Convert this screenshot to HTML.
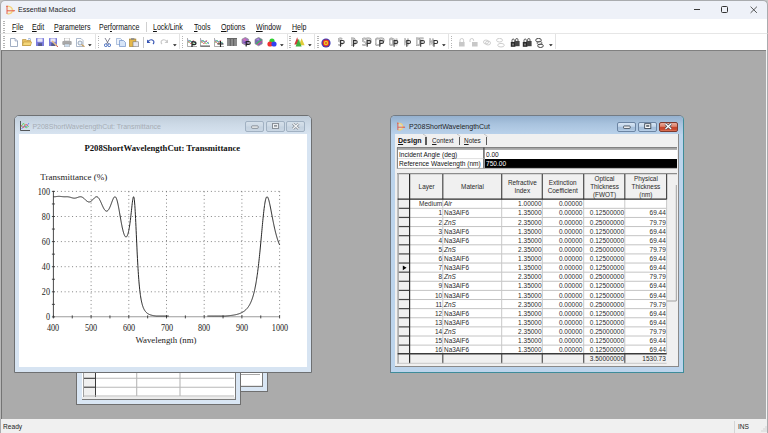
<!DOCTYPE html>
<html><head><meta charset="utf-8"><style>
*{margin:0;padding:0;box-sizing:border-box}
html,body{width:768px;height:433px;overflow:hidden;background:#c6c6c6}
body{position:relative;font-family:"Liberation Sans",sans-serif;color:#000}
.a{position:absolute}
.t{position:absolute;white-space:nowrap;line-height:1}
</style></head><body>
<div class="a" style="left:0px;top:0px;width:768px;height:19px;background:#eef1f8;border:1px solid #a9abae;border-bottom:none;border-radius:5px 5px 0 0"></div>
<svg class="a" style="left:5px;top:4.5px" width="11" height="10" viewBox="0 0 11 10">
<path d="M2.5 1.2 Q7.4 1.6 7.4 5.2 Q7.4 8.8 2.5 9" stroke="#f3d27a" stroke-width="1.3" fill="#fbeec0" fill-opacity="0.5"/>
<path d="M2 1 V9" stroke="#e2503c" stroke-width="0.9"/>
<path d="M2 0.2 L1 1.8 H3 Z" fill="#e2503c"/>
<path d="M2 5.8 H9" stroke="#e2503c" stroke-width="0.9"/>
<path d="M10.2 5.8 L8.6 4.8 V6.8 Z" fill="#e2503c"/></svg>
<div class="t" style="left:17.5px;top:5.6px;font-size:7.6px;color:#1b1b1b;font-weight:400;font-family:'Liberation Sans',sans-serif;transform:scaleX(0.93);transform-origin:0 0">Essential Macleod</div>
<div class="a" style="left:693.5px;top:8.8px;width:6.6px;height:0.9px;background:#3a3a3a"></div>
<div class="a" style="left:721px;top:6.3px;width:7px;height:6.3px;border:1px solid #333;border-radius:1.5px"></div>
<svg class="a" style="left:749.5px;top:6px" width="8" height="8" viewBox="0 0 8 8">
<path d="M0.6 0.7 L6.9 6.9 M6.9 0.7 L0.6 6.9" stroke="#3a3a3a" stroke-width="0.85"/></svg>
<div class="a" style="left:0px;top:19px;width:768px;height:14px;background:#fff;border-left:1px solid #a9abae;border-right:1px solid #a9abae"></div>
<div class="a" style="left:3.2px;top:21px;width:1.6px;height:0.9px;background:#b4b4b4"></div>
<div class="a" style="left:3.2px;top:23.2px;width:1.6px;height:0.9px;background:#b4b4b4"></div>
<div class="a" style="left:3.2px;top:25.4px;width:1.6px;height:0.9px;background:#b4b4b4"></div>
<div class="a" style="left:3.2px;top:27.599999999999998px;width:1.6px;height:0.9px;background:#b4b4b4"></div>
<div class="a" style="left:3.2px;top:29.799999999999997px;width:1.6px;height:0.9px;background:#b4b4b4"></div>
<div class="a" style="left:3.2px;top:31.999999999999996px;width:1.6px;height:0.9px;background:#b4b4b4"></div>
<div class="t" style="left:11.5px;top:23.6px;font-size:8.2px;color:#111;font-weight:400;font-family:'Liberation Sans',sans-serif;transform:scaleX(0.86);transform-origin:0 0"><u>F</u>ile</div>
<div class="t" style="left:32px;top:23.6px;font-size:8.2px;color:#111;font-weight:400;font-family:'Liberation Sans',sans-serif;transform:scaleX(0.86);transform-origin:0 0"><u>E</u>dit</div>
<div class="t" style="left:54px;top:23.6px;font-size:8.2px;color:#111;font-weight:400;font-family:'Liberation Sans',sans-serif;transform:scaleX(0.86);transform-origin:0 0"><u>P</u>arameters</div>
<div class="t" style="left:99px;top:23.6px;font-size:8.2px;color:#111;font-weight:400;font-family:'Liberation Sans',sans-serif;transform:scaleX(0.86);transform-origin:0 0">Per<u>f</u>ormance</div>
<div class="t" style="left:153px;top:23.6px;font-size:8.2px;color:#111;font-weight:400;font-family:'Liberation Sans',sans-serif;transform:scaleX(0.86);transform-origin:0 0"><u>L</u>ock/Link</div>
<div class="t" style="left:194px;top:23.6px;font-size:8.2px;color:#111;font-weight:400;font-family:'Liberation Sans',sans-serif;transform:scaleX(0.86);transform-origin:0 0"><u>T</u>ools</div>
<div class="t" style="left:221px;top:23.6px;font-size:8.2px;color:#111;font-weight:400;font-family:'Liberation Sans',sans-serif;transform:scaleX(0.86);transform-origin:0 0"><u>O</u>ptions</div>
<div class="t" style="left:256px;top:23.6px;font-size:8.2px;color:#111;font-weight:400;font-family:'Liberation Sans',sans-serif;transform:scaleX(0.86);transform-origin:0 0"><u>W</u>indow</div>
<div class="t" style="left:292px;top:23.6px;font-size:8.2px;color:#111;font-weight:400;font-family:'Liberation Sans',sans-serif;transform:scaleX(0.86);transform-origin:0 0"><u>H</u>elp</div>
<div class="a" style="left:146px;top:21.5px;width:1px;height:10px;background:#d0d0d0"></div>
<div class="a" style="left:1px;top:33px;width:766px;height:1px;background:#e6e6e6"></div>
<div class="a" style="left:0px;top:34px;width:768px;height:16px;background:#fff;border-left:1px solid #a9abae;border-right:1px solid #a9abae"></div>
<div class="a" style="left:94.5px;top:34px;width:1px;height:15px;background:#e3e3e3"></div>
<div class="a" style="left:178.5px;top:34px;width:1px;height:15px;background:#e3e3e3"></div>
<div class="a" style="left:286.5px;top:34px;width:1px;height:15px;background:#e3e3e3"></div>
<div class="a" style="left:314px;top:34px;width:1px;height:15px;background:#e3e3e3"></div>
<div class="a" style="left:447.8px;top:34px;width:1px;height:15px;background:#e3e3e3"></div>
<div class="a" style="left:554.8px;top:34px;width:1px;height:15px;background:#e3e3e3"></div>
<div class="a" style="left:3.2px;top:36px;width:1.6px;height:0.9px;background:#b4b4b4"></div>
<div class="a" style="left:3.2px;top:38.2px;width:1.6px;height:0.9px;background:#b4b4b4"></div>
<div class="a" style="left:3.2px;top:40.400000000000006px;width:1.6px;height:0.9px;background:#b4b4b4"></div>
<div class="a" style="left:3.2px;top:42.60000000000001px;width:1.6px;height:0.9px;background:#b4b4b4"></div>
<div class="a" style="left:3.2px;top:44.80000000000001px;width:1.6px;height:0.9px;background:#b4b4b4"></div>
<div class="a" style="left:3.2px;top:47.000000000000014px;width:1.6px;height:0.9px;background:#b4b4b4"></div>
<div class="a" style="left:97.7px;top:36px;width:1.6px;height:0.9px;background:#b4b4b4"></div>
<div class="a" style="left:97.7px;top:38.2px;width:1.6px;height:0.9px;background:#b4b4b4"></div>
<div class="a" style="left:97.7px;top:40.400000000000006px;width:1.6px;height:0.9px;background:#b4b4b4"></div>
<div class="a" style="left:97.7px;top:42.60000000000001px;width:1.6px;height:0.9px;background:#b4b4b4"></div>
<div class="a" style="left:97.7px;top:44.80000000000001px;width:1.6px;height:0.9px;background:#b4b4b4"></div>
<div class="a" style="left:97.7px;top:47.000000000000014px;width:1.6px;height:0.9px;background:#b4b4b4"></div>
<div class="a" style="left:181.7px;top:36px;width:1.6px;height:0.9px;background:#b4b4b4"></div>
<div class="a" style="left:181.7px;top:38.2px;width:1.6px;height:0.9px;background:#b4b4b4"></div>
<div class="a" style="left:181.7px;top:40.400000000000006px;width:1.6px;height:0.9px;background:#b4b4b4"></div>
<div class="a" style="left:181.7px;top:42.60000000000001px;width:1.6px;height:0.9px;background:#b4b4b4"></div>
<div class="a" style="left:181.7px;top:44.80000000000001px;width:1.6px;height:0.9px;background:#b4b4b4"></div>
<div class="a" style="left:181.7px;top:47.000000000000014px;width:1.6px;height:0.9px;background:#b4b4b4"></div>
<div class="a" style="left:289.2px;top:36px;width:1.6px;height:0.9px;background:#b4b4b4"></div>
<div class="a" style="left:289.2px;top:38.2px;width:1.6px;height:0.9px;background:#b4b4b4"></div>
<div class="a" style="left:289.2px;top:40.400000000000006px;width:1.6px;height:0.9px;background:#b4b4b4"></div>
<div class="a" style="left:289.2px;top:42.60000000000001px;width:1.6px;height:0.9px;background:#b4b4b4"></div>
<div class="a" style="left:289.2px;top:44.80000000000001px;width:1.6px;height:0.9px;background:#b4b4b4"></div>
<div class="a" style="left:289.2px;top:47.000000000000014px;width:1.6px;height:0.9px;background:#b4b4b4"></div>
<div class="a" style="left:317.2px;top:36px;width:1.6px;height:0.9px;background:#b4b4b4"></div>
<div class="a" style="left:317.2px;top:38.2px;width:1.6px;height:0.9px;background:#b4b4b4"></div>
<div class="a" style="left:317.2px;top:40.400000000000006px;width:1.6px;height:0.9px;background:#b4b4b4"></div>
<div class="a" style="left:317.2px;top:42.60000000000001px;width:1.6px;height:0.9px;background:#b4b4b4"></div>
<div class="a" style="left:317.2px;top:44.80000000000001px;width:1.6px;height:0.9px;background:#b4b4b4"></div>
<div class="a" style="left:317.2px;top:47.000000000000014px;width:1.6px;height:0.9px;background:#b4b4b4"></div>
<div class="a" style="left:450.7px;top:36px;width:1.6px;height:0.9px;background:#b4b4b4"></div>
<div class="a" style="left:450.7px;top:38.2px;width:1.6px;height:0.9px;background:#b4b4b4"></div>
<div class="a" style="left:450.7px;top:40.400000000000006px;width:1.6px;height:0.9px;background:#b4b4b4"></div>
<div class="a" style="left:450.7px;top:42.60000000000001px;width:1.6px;height:0.9px;background:#b4b4b4"></div>
<div class="a" style="left:450.7px;top:44.80000000000001px;width:1.6px;height:0.9px;background:#b4b4b4"></div>
<div class="a" style="left:450.7px;top:47.000000000000014px;width:1.6px;height:0.9px;background:#b4b4b4"></div>
<div class="a" style="left:142.5px;top:36.5px;width:1px;height:11px;background:#c8c8c8"></div>
<svg class="a" style="left:9.5px;top:37.5px" width="8" height="9" viewBox="0 0 8 9"><path d="M0.5 0.5H5L7.5 3V8.5H0.5Z" fill="#fff" stroke="#8a9bb5" stroke-width="0.8"/><path d="M5 0.5V3H7.5" fill="#dde" stroke="#8a9bb5" stroke-width="0.6"/></svg>
<svg class="a" style="left:22px;top:38px" width="10" height="8" viewBox="0 0 10 8"><path d="M0.5 1.5H4L5 2.5H8.5V7.5H0.5Z" fill="#e8c060" stroke="#b08a30" stroke-width="0.6"/><path d="M1.5 4H9.8L8.5 7.5H0.5Z" fill="#f5d77a" stroke="#b08a30" stroke-width="0.5"/><path d="M6 1 Q8 0 9 1.5" stroke="#5a7fc0" stroke-width="0.7" fill="none"/></svg>
<svg class="a" style="left:36px;top:38px" width="8" height="8" viewBox="0 0 8 8"><rect x="0" y="0" width="8" height="8" rx="0.5" fill="#7c7cdc"/><rect x="1.4" y="0.4" width="5.2" height="3.4" fill="#e8e8f8"/><rect x="2.2" y="5.2" width="3.8" height="2.8" fill="#555a8a"/></svg>
<svg class="a" style="left:49px;top:38px" width="9" height="9" viewBox="0 0 9 9"><rect x="0" y="0" width="8" height="8" rx="0.5" fill="#7c7cdc"/><rect x="1.4" y="0.4" width="5.2" height="3.4" fill="#e8e8f8"/><rect x="2.2" y="5.2" width="3.8" height="2.8" fill="#555a8a"/><path d="M3 3L8 8" stroke="#e8c080" stroke-width="1.4"/><path d="M7.5 7.5L8.8 8.8" stroke="#d03030" stroke-width="1"/></svg>
<svg class="a" style="left:62px;top:38px" width="10" height="9" viewBox="0 0 10 9"><rect x="2.5" y="0" width="5" height="3" fill="#fff" stroke="#999" stroke-width="0.5"/><rect x="0.3" y="3" width="9.4" height="4" rx="1" fill="#a8a8a8"/><rect x="2.5" y="6" width="5" height="3" fill="#cfe0f0" stroke="#999" stroke-width="0.5"/></svg>
<svg class="a" style="left:76px;top:37.5px" width="9" height="9" viewBox="0 0 9 9"><path d="M0.5 0.5H5L7 2.5V8.5H0.5Z" fill="#fff" stroke="#8a9bb5" stroke-width="0.7"/><circle cx="4" cy="5" r="2" fill="#e6f0fa" stroke="#7a8aa0" stroke-width="0.7"/><path d="M5.5 6.5L8.5 8.8" stroke="#c8a060" stroke-width="1.2"/></svg>
<svg class="a" style="left:88.3px;top:44.2px" width="4" height="3" viewBox="0 0 4 3"><path d="M0 0.2H3.7L1.85 2.2Z" fill="#1a1a1a"/></svg>
<svg class="a" style="left:103.5px;top:38px" width="7" height="9" viewBox="0 0 7 9"><path d="M1 0L4.5 6 M6 0L2.5 6" stroke="#667" stroke-width="0.8"/><circle cx="1.8" cy="7.2" r="1.4" fill="none" stroke="#3a62b8" stroke-width="0.9"/><circle cx="5.2" cy="7.2" r="1.4" fill="none" stroke="#3a62b8" stroke-width="0.9"/></svg>
<svg class="a" style="left:115.5px;top:38px" width="10" height="9" viewBox="0 0 10 9"><path d="M0.5 0.5H4.5L6 2V6.5H0.5Z" fill="#eef3fb" stroke="#7f9cc8" stroke-width="0.6"/><path d="M3.5 2.5H7.5L9.5 4.5V8.5H3.5Z" fill="#d6e4f7" stroke="#5b82c0" stroke-width="0.6"/></svg>
<svg class="a" style="left:129px;top:37.5px" width="10" height="9" viewBox="0 0 10 9"><rect x="0.4" y="1" width="6.5" height="7.5" fill="#e6b84a" stroke="#9c7a2a" stroke-width="0.6"/><rect x="2" y="0.2" width="3.4" height="1.6" fill="#888"/><rect x="4" y="3.8" width="5.6" height="5" fill="#e8e8f0" stroke="#777" stroke-width="0.6"/></svg>
<svg class="a" style="left:147px;top:39px" width="8" height="6" viewBox="0 0 8 6"><path d="M1.2 2.2 Q4 -0.5 6.5 1.8 Q7.5 3.5 6 5" stroke="#3553b3" stroke-width="1.1" fill="none"/><path d="M0 0.5V4H3.5Z" fill="#3553b3"/></svg>
<svg class="a" style="left:160px;top:39px" width="8" height="6" viewBox="0 0 8 6"><path d="M6.8 2.2 Q4 -0.5 1.5 1.8 Q0.5 3.5 2 5" stroke="#c8c8c8" stroke-width="1.1" fill="none"/><path d="M8 0.5V4H4.5Z" fill="#c8c8c8"/></svg>
<svg class="a" style="left:173.4px;top:44.2px" width="4" height="3" viewBox="0 0 4 3"><path d="M0 0.2H3.7L1.85 2.2Z" fill="#1a1a1a"/></svg>
<svg class="a" style="left:186.7px;top:37.5px" width="10" height="9" viewBox="0 0 10 9"><path d="M0.5 0V8.5H10" stroke="#777" stroke-width="0.6" fill="none"/><path d="M1 2 L4 4 L6 3 L9 6" stroke="#4060e0" stroke-width="0.7" fill="none"/><path d="M1 5 L3 2 L6 6 L9 4" stroke="#40c040" stroke-width="0.6" fill="none"/><path d="M1 3 L4 6 L7 2" stroke="#e04040" stroke-width="0.6" fill="none"/><path d="M5 3.5V9 M5 3.8H7.5Q9 3.8 9 5.2Q9 6.6 7.5 6.6H5" stroke="#222" stroke-width="1.2" fill="none"/></svg>
<svg class="a" style="left:200.4px;top:37.5px" width="10" height="9" viewBox="0 0 10 9"><path d="M0.5 0V8.5H10" stroke="#777" stroke-width="0.6" fill="none"/><path d="M1 2 L4 4 L6 3 L9 6" stroke="#4060e0" stroke-width="0.7" fill="none"/><path d="M1 5 L3 2 L6 6 L9 4" stroke="#40c040" stroke-width="0.6" fill="none"/><path d="M1 3 L4 6 L7 2" stroke="#e04040" stroke-width="0.6" fill="none"/><path d="M0.5 8H10" stroke="#333" stroke-width="0.8"/></svg>
<svg class="a" style="left:214px;top:37.5px" width="10" height="9" viewBox="0 0 10 9"><path d="M0.5 0V8.5H10" stroke="#777" stroke-width="0.6" fill="none"/><path d="M1 2 L4 4 L6 3 L9 6" stroke="#4060e0" stroke-width="0.7" fill="none"/><path d="M1 5 L3 2 L6 6 L9 4" stroke="#40c040" stroke-width="0.6" fill="none"/><path d="M1 3 L4 6 L7 2" stroke="#e04040" stroke-width="0.6" fill="none"/><path d="M6.5 3V9 M3.5 6H9.5" stroke="#222" stroke-width="1.1"/></svg>
<svg class="a" style="left:227px;top:38px" width="10" height="8" viewBox="0 0 10 8"><rect x="0" y="0" width="10" height="8" fill="#8a8a8a"/><path d="M3.3 0V8 M6.6 0V8" stroke="#555" stroke-width="0.8"/><rect x="0" y="0" width="10" height="1" fill="#666"/></svg>
<svg class="a" style="left:240.8px;top:37.3px" width="10" height="10" viewBox="0 0 10 10"><path d="M1 2.2L4.3 0.4L7.6 2.2V6.2L4.3 8L1 6.2Z" fill="#a070c8" stroke="#8a8a8a" stroke-width="0.7"/><path d="M2 2.5L4.3 1.3L5 4.5Z" fill="#e070b0"/><path d="M2 6L4.8 4.2L6.6 6Z" fill="#6a50b0"/><path d="M5.2 4.2V9.6 M5.2 4.5H7.6Q9.3 4.5 9.3 5.9Q9.3 7.3 7.6 7.3H5.2" stroke="#222" stroke-width="1.15" fill="none"/></svg>
<svg class="a" style="left:254.4px;top:37.3px" width="10" height="10" viewBox="0 0 10 10"><path d="M1 2.4L4.6 0.4L8.2 2.4V6.8L4.6 8.8L1 6.8Z" fill="#7a68b8" stroke="#8a8a8a" stroke-width="0.7"/><path d="M2.2 7L7.4 2.6" stroke="#3cb860" stroke-width="1.3"/><path d="M3.2 7.8L7.8 4.4" stroke="#e04a8a" stroke-width="1"/><path d="M1.6 3L4.6 1.2L5.6 3.6Z" fill="#b090e0"/></svg>
<svg class="a" style="left:267px;top:37.5px" width="10" height="9" viewBox="0 0 10 9"><circle cx="5" cy="3" r="2.6" fill="#30d030"/><circle cx="3" cy="6" r="2.6" fill="#f03030"/><circle cx="7" cy="6" r="2.6" fill="#3040f0"/></svg>
<svg class="a" style="left:280.0px;top:44.2px" width="4" height="3" viewBox="0 0 4 3"><path d="M0 0.2H3.7L1.85 2.2Z" fill="#1a1a1a"/></svg>
<svg class="a" style="left:294.2px;top:37.2px" width="11" height="10" viewBox="0 0 11 10"><path d="M3.2 0.3L0.3 7.5H5.2Z" fill="#d23a3a"/><path d="M7.6 1.2L5 8.2H10.6Z" fill="#e2cc3a"/><path d="M4.6 2L1.6 9.6H7.6Z" fill="#3fae3f"/><path d="M4.6 2L6.2 6" stroke="#7ad07a" stroke-width="0.6"/></svg>
<svg class="a" style="left:307.8px;top:44.2px" width="4" height="3" viewBox="0 0 4 3"><path d="M0 0.2H3.7L1.85 2.2Z" fill="#1a1a1a"/></svg>
<svg class="a" style="left:321px;top:37.5px" width="10" height="10" viewBox="0 0 10 10"><circle cx="5" cy="5" r="4.6" fill="#3a3ab8"/><circle cx="5" cy="5" r="3.4" fill="#e03030"/><circle cx="5" cy="5" r="2.2" fill="#f0d020"/><circle cx="5" cy="5" r="1" fill="#e04040"/></svg>
<svg class="a" style="left:337.9px;top:37px" width="15" height="11" viewBox="0 0 15 11"><g transform="translate(0.00,0.9)"><path d="M4 1.4Q3.5 0.5 2.2 0.5Q0.6 0.5 0.6 2.1Q0.6 3.5 2.2 3.8Q3.9 4.1 3.9 5.7Q3.9 7.3 2.1 7.3Q0.8 7.3 0.4 6.3" stroke="#959595" stroke-width="1.6" fill="none"/><path d="M4 1.4Q3.5 0.5 2.2 0.5Q0.6 0.5 0.6 2.1Q0.6 3.5 2.2 3.8Q3.9 4.1 3.9 5.7Q3.9 7.3 2.1 7.3Q0.8 7.3 0.4 6.3" stroke="#f4f4f4" stroke-width="0.5" fill="none"/></g><path d="M2.5 3.0V9.7 M2.5 3.5H4.7Q6.2 3.5 6.2 5.0Q6.2 6.5 4.7 6.5H2.5" stroke="#333" stroke-width="1.05" fill="none"/></svg>
<svg class="a" style="left:350.9px;top:37px" width="15" height="11" viewBox="0 0 15 11"><g transform="translate(0.00,0.9)"><path d="M0.6 0.5V7.3H1.9Q4.1 7.3 4.1 3.9Q4.1 0.5 1.9 0.5Z" stroke="#959595" stroke-width="1.6" fill="none"/><path d="M0.6 0.5V7.3H1.9Q4.1 7.3 4.1 3.9Q4.1 0.5 1.9 0.5Z" stroke="#f4f4f4" stroke-width="0.5" fill="none"/></g><path d="M2.5 3.0V9.7 M2.5 3.5H4.7Q6.2 3.5 6.2 5.0Q6.2 6.5 4.7 6.5H2.5" stroke="#333" stroke-width="1.05" fill="none"/></svg>
<svg class="a" style="left:362.2px;top:37px" width="15" height="11" viewBox="0 0 15 11"><g transform="translate(0.00,0.9)"><path d="M4 1.4Q3.5 0.5 2.2 0.5Q0.6 0.5 0.6 2.1Q0.6 3.5 2.2 3.8Q3.9 4.1 3.9 5.7Q3.9 7.3 2.1 7.3Q0.8 7.3 0.4 6.3" stroke="#959595" stroke-width="1.6" fill="none"/><path d="M4 1.4Q3.5 0.5 2.2 0.5Q0.6 0.5 0.6 2.1Q0.6 3.5 2.2 3.8Q3.9 4.1 3.9 5.7Q3.9 7.3 2.1 7.3Q0.8 7.3 0.4 6.3" stroke="#f4f4f4" stroke-width="0.5" fill="none"/></g><g transform="translate(4.60,0.9)"><path d="M0.6 7.3V0.5H2.3Q4.1 0.5 4.1 2.3Q4.1 4.1 2.3 4.1H0.6" stroke="#959595" stroke-width="1.6" fill="none"/><path d="M0.6 7.3V0.5H2.3Q4.1 0.5 4.1 2.3Q4.1 4.1 2.3 4.1H0.6" stroke="#f4f4f4" stroke-width="0.5" fill="none"/></g><path d="M5.199999999999989 3.0V9.7 M5.199999999999989 3.5H7.399999999999989Q8.899999999999988 3.5 8.899999999999988 5.0Q8.899999999999988 6.5 7.399999999999989 6.5H5.199999999999989" stroke="#333" stroke-width="1.05" fill="none"/></svg>
<svg class="a" style="left:375.4px;top:37px" width="15" height="11" viewBox="0 0 15 11"><g transform="translate(0.00,0.9)"><path d="M4.1 1.3Q3.6 0.5 2.4 0.5Q0.5 0.5 0.5 3.9Q0.5 7.3 2.4 7.3Q3.6 7.3 4.1 6.5" stroke="#959595" stroke-width="1.6" fill="none"/><path d="M4.1 1.3Q3.6 0.5 2.4 0.5Q0.5 0.5 0.5 3.9Q0.5 7.3 2.4 7.3Q3.6 7.3 4.1 6.5" stroke="#f4f4f4" stroke-width="0.5" fill="none"/></g><g transform="translate(4.60,0.9)"><path d="M0.6 7.3V0.5H2.3Q4.1 0.5 4.1 2.3Q4.1 4.1 2.3 4.1H0.6" stroke="#959595" stroke-width="1.6" fill="none"/><path d="M0.6 7.3V0.5H2.3Q4.1 0.5 4.1 2.3Q4.1 4.1 2.3 4.1H0.6" stroke="#f4f4f4" stroke-width="0.5" fill="none"/></g><path d="M4.800000000000011 3.0V9.7 M4.800000000000011 3.5H7.0000000000000115Q8.50000000000001 3.5 8.50000000000001 5.0Q8.50000000000001 6.5 7.0000000000000115 6.5H4.800000000000011" stroke="#333" stroke-width="1.05" fill="none"/></svg>
<svg class="a" style="left:389.2px;top:37px" width="15" height="11" viewBox="0 0 15 11"><g transform="translate(0.00,0.9)"><path d="M2.2 0.5Q0.5 0.5 0.5 3.9Q0.5 7.3 2.2 7.3Q3.9 7.3 3.9 3.9Q3.9 0.5 2.2 0.5Z" stroke="#959595" stroke-width="1.6" fill="none"/><path d="M2.2 0.5Q0.5 0.5 0.5 3.9Q0.5 7.3 2.2 7.3Q3.9 7.3 3.9 3.9Q3.9 0.5 2.2 0.5Z" stroke="#f4f4f4" stroke-width="0.5" fill="none"/></g><g transform="translate(3.60,0.9)"><path d="M0.6 7.3V0.5L3.9 7.3V0.5" stroke="#959595" stroke-width="1.6" fill="none"/><path d="M0.6 7.3V0.5L3.9 7.3V0.5" stroke="#f4f4f4" stroke-width="0.5" fill="none"/></g><path d="M5.100000000000023 3.0V9.7 M5.100000000000023 3.5H7.300000000000023Q8.800000000000022 3.5 8.800000000000022 5.0Q8.800000000000022 6.5 7.300000000000023 6.5H5.100000000000023" stroke="#333" stroke-width="1.05" fill="none"/></svg>
<svg class="a" style="left:403.8px;top:37px" width="15" height="11" viewBox="0 0 15 11"><g transform="translate(0.00,0.9)"><path d="M0.6 7.3V0.5L3.9 7.3V0.5" stroke="#959595" stroke-width="1.6" fill="none"/><path d="M0.6 7.3V0.5L3.9 7.3V0.5" stroke="#f4f4f4" stroke-width="0.5" fill="none"/></g><path d="M2.8000000000000114 3.0V9.7 M2.8000000000000114 3.5H5.0000000000000115Q6.5000000000000115 3.5 6.5000000000000115 5.0Q6.5000000000000115 6.5 5.0000000000000115 6.5H2.8000000000000114" stroke="#333" stroke-width="1.05" fill="none"/></svg>
<svg class="a" style="left:415.8px;top:37px" width="15" height="11" viewBox="0 0 15 11"><g transform="translate(0.00,0.9)"><path d="M0.6 0.5V7.3H1.9Q4.1 7.3 4.1 3.9Q4.1 0.5 1.9 0.5Z" stroke="#959595" stroke-width="1.6" fill="none"/><path d="M0.6 0.5V7.3H1.9Q4.1 7.3 4.1 3.9Q4.1 0.5 1.9 0.5Z" stroke="#f4f4f4" stroke-width="0.5" fill="none"/></g><g transform="translate(3.60,0.9)"><path d="M4 0.5H0.6V7.3M0.6 3.8H3.4" stroke="#959595" stroke-width="1.6" fill="none"/><path d="M4 0.5H0.6V7.3M0.6 3.8H3.4" stroke="#f4f4f4" stroke-width="0.5" fill="none"/></g><path d="M4.699999999999989 3.0V9.7 M4.699999999999989 3.5H6.899999999999989Q8.399999999999988 3.5 8.399999999999988 5.0Q8.399999999999988 6.5 6.899999999999989 6.5H4.699999999999989" stroke="#333" stroke-width="1.05" fill="none"/></svg>
<svg class="a" style="left:428.8px;top:37px" width="15" height="11" viewBox="0 0 15 11"><g transform="translate(0.00,0.9)"><path d="M0.6 7.3V0.5L3.9 7.3V0.5" stroke="#959595" stroke-width="1.6" fill="none"/><path d="M0.6 7.3V0.5L3.9 7.3V0.5" stroke="#f4f4f4" stroke-width="0.5" fill="none"/></g><path d="M5.0 3.0V9.7 M5.0 3.5H7.2Q8.7 3.5 8.7 5.0Q8.7 6.5 7.2 6.5H5.0" stroke="#333" stroke-width="1.05" fill="none"/></svg>
<svg class="a" style="left:441.9px;top:44.2px" width="4" height="3" viewBox="0 0 4 3"><path d="M0 0.2H3.7L1.85 2.2Z" fill="#1a1a1a"/></svg>
<svg class="a" style="left:457.5px;top:37.5px" width="8" height="9" viewBox="0 0 8 9"><path d="M2 4V2.2Q2 0.5 3.8 0.5Q5.6 0.5 5.6 2.2V4" stroke="#c8c8c8" stroke-width="0.9" fill="none"/><rect x="1" y="4" width="5.6" height="4.5" fill="#c8c8c8"/></svg>
<svg class="a" style="left:469px;top:37.5px" width="9" height="9" viewBox="0 0 9 9"><path d="M1 4V2.2Q1 0.5 2.8 0.5Q4.6 0.5 4.6 2.2V3" stroke="#c8c8c8" stroke-width="0.9" fill="none"/><rect x="3" y="4" width="5.6" height="4.5" fill="#c8c8c8"/></svg>
<svg class="a" style="left:483px;top:38.5px" width="8" height="7" viewBox="0 0 8 7"><ellipse cx="3" cy="3" rx="2.5" ry="2" fill="none" stroke="#c8c8c8" stroke-width="0.9"/><ellipse cx="5" cy="4" rx="2.5" ry="2" fill="none" stroke="#c8c8c8" stroke-width="0.9"/></svg>
<svg class="a" style="left:496px;top:37.5px" width="9" height="10" viewBox="0 0 9 10"><ellipse cx="3.5" cy="2.2" rx="3" ry="1.8" fill="none" stroke="#c8c8c8" stroke-width="0.9"/><ellipse cx="5" cy="7.2" rx="3.3" ry="1.8" fill="none" stroke="#c8c8c8" stroke-width="0.9"/></svg>
<svg class="a" style="left:509.5px;top:37.5px" width="10" height="9" viewBox="0 0 10 9"><path d="M2 4V2.5Q2 1 3.2 1Q4.4 1 4.4 2.5V4 M5.6 3V1.8Q5.6 0.5 6.8 0.5Q8 0.5 8 1.8V3" stroke="#333" stroke-width="0.8" fill="none"/><rect x="0.8" y="4" width="4.6" height="4.8" fill="#2a2a2a"/><rect x="5" y="3" width="4.6" height="5.2" fill="#444"/><rect x="2.5" y="5.5" width="1" height="2" fill="#bbb"/></svg>
<svg class="a" style="left:522px;top:37.5px" width="10" height="9" viewBox="0 0 10 9"><path d="M2 4V2.5Q2 1 3.2 1Q4.4 1 4.4 2.5V4 M5.6 3V1.8Q5.6 0.5 6.8 0.5Q8 0.5 8 1.8V3" stroke="#333" stroke-width="0.8" fill="none"/><rect x="0.8" y="4" width="4.6" height="4.8" fill="#2a2a2a"/><rect x="5" y="3" width="4.6" height="5.2" fill="#444"/><rect x="2.5" y="5.5" width="1" height="2" fill="#bbb"/></svg>
<svg class="a" style="left:535.3px;top:37.5px" width="9" height="10" viewBox="0 0 9 10"><ellipse cx="3.5" cy="2.2" rx="2.8" ry="1.8" fill="none" stroke="#333" stroke-width="0.9"/><ellipse cx="4.5" cy="5" rx="2.5" ry="1.6" fill="none" stroke="#555" stroke-width="0.8"/><ellipse cx="5.5" cy="7.8" rx="2.8" ry="1.7" fill="none" stroke="#333" stroke-width="0.9"/></svg>
<svg class="a" style="left:549.4px;top:44.2px" width="4" height="3" viewBox="0 0 4 3"><path d="M0 0.2H3.7L1.85 2.2Z" fill="#1a1a1a"/></svg>
<div class="a" style="left:0px;top:419px;width:768px;height:14px;background:#f0f0f0;border-left:1px solid #a9abae;border-right:1px solid #a9abae"></div>
<div class="t" style="left:2.7px;top:422.9px;font-size:7.2px;color:#222;font-weight:400;font-family:'Liberation Sans',sans-serif;transform:scaleX(0.92);transform-origin:0 0">Ready</div>
<div class="a" style="left:734px;top:420.5px;width:1px;height:12px;background:#d5d5d5"></div>
<div class="t" style="left:738.1px;top:422.9px;font-size:7.2px;color:#222;font-weight:400;font-family:'Liberation Sans',sans-serif;transform:scaleX(0.92);transform-origin:0 0">INS</div>
<svg class="a" style="left:760px;top:425px" width="7" height="7" viewBox="0 0 7 7"><path d="M5.5 1.5h1v1h-1zM3.5 3.5h1v1h-1zM5.5 3.5h1v1h-1zM1.5 5.5h1v1h-1zM3.5 5.5h1v1h-1zM5.5 5.5h1v1h-1z" fill="#b8b8b8"/></svg>
<div class="a" style="left:0px;top:50px;width:768px;height:369px;background:#f4f4f4;border-left:1px solid #b8b8b8;border-right:1px solid #a9abae"></div>
<div class="a" style="left:1px;top:50px;width:765px;height:369px;background:#ababab;border-left:1px solid #747474;border-top:1px solid #808080"></div>
<div class="a" style="left:150px;top:300px;width:118px;height:92px;background:#d9e6f4;border:1px solid #6f6f6f"></div>
<div class="a" style="left:155px;top:300px;width:108px;height:87px;background:#fff;border-right:1px solid #7a7a7a;border-bottom:1px solid #7a7a7a"></div>
<div class="a" style="left:155px;top:374px;width:105px;height:1px;background:#a8a8a8"></div>
<div class="a" style="left:155px;top:385px;width:107px;height:1px;background:#e6e6e6"></div>
<div class="a" style="left:76px;top:300px;width:165px;height:105px;background:#d9e6f4;border:1px solid #6f6f6f"></div>
<div class="a" style="left:82px;top:300px;width:154px;height:100px;background:#fff;border-right:1px solid #7a7a7a;border-bottom:1px solid #7a7a7a"></div>
<div class="a" style="left:83px;top:300px;width:13px;height:96.5px;background:#f0f0f0;border-left:1px solid #a0a0a0;border-right:1px solid #3a3a3a"></div>
<svg class="a" style="left:0;top:0" width="768" height="433" viewBox="0 0 768 433">
<line x1="84" y1="378.3" x2="95" y2="378.3" stroke="#3a3a3a" stroke-width="1.1"/>
<line x1="96" y1="378.3" x2="234" y2="378.3" stroke="#b8b8b8" stroke-width="1.1"/>
<line x1="84" y1="387.2" x2="95" y2="387.2" stroke="#3a3a3a" stroke-width="1.1"/>
<line x1="96" y1="387.2" x2="234" y2="387.2" stroke="#b8b8b8" stroke-width="1.1"/>
<line x1="84" y1="396" x2="234" y2="396" stroke="#b8b8b8" stroke-width="1"/>
<line x1="136.7" y1="372" x2="136.7" y2="396" stroke="#b8b8b8" stroke-width="1.1"/>
<line x1="180" y1="372" x2="180" y2="396" stroke="#b8b8b8" stroke-width="1.1"/>
</svg>
<div class="a" style="left:82px;top:397px;width:153px;height:2px;background:#ececec"></div>
<div class="a" style="left:14px;top:115px;width:298px;height:258px;background:#d7e4f2;border:1px solid #6e7072;border-radius:5px 5px 0 0"></div>
<div class="a" style="left:15px;top:116px;width:296px;height:18px;background:linear-gradient(#bfccd9,#ccd9e6 45%,#d7e3f0);border-radius:4px 4px 0 0"></div>
<div class="a" style="left:19px;top:134px;width:288px;height:233px;background:#fff"></div>
<svg class="a" style="left:19.5px;top:121px" width="10" height="10" viewBox="0 0 10 10"><path d="M0.5 0V9.5H10" stroke="#333" stroke-width="0.8" fill="none"/><path d="M1.5 8 L4 5 L6 6 L9 2" stroke="#5a78f0" stroke-width="0.8" fill="none"/><path d="M1 6 L3.5 2 L6 7 L9 5" stroke="#50d050" stroke-width="0.7" fill="none"/><path d="M1 4 L3.5 7 L6 3 L8 5" stroke="#f05050" stroke-width="0.7" fill="none"/></svg>
<div class="t" style="left:32.4px;top:122.9px;font-size:7px;color:#a6adb5;font-weight:400;font-family:'Liberation Sans',sans-serif;">P208ShortWavelengthCut: Transmittance</div>
<div class="a" style="left:245.2px;top:121.4px;width:19.2px;height:10.2px;background:linear-gradient(#d5e0ea,#cdd9e5 45%,#c4d2e0 55%,#cad7e4);border:1px solid #a1b1c2;border-radius:2px"></div>
<div class="a" style="left:266px;top:121.4px;width:18.8px;height:10.2px;background:linear-gradient(#d5e0ea,#cdd9e5 45%,#c4d2e0 55%,#cad7e4);border:1px solid #a1b1c2;border-radius:2px"></div>
<div class="a" style="left:286.4px;top:121.4px;width:18.8px;height:10.2px;background:linear-gradient(#d5e0ea,#cdd9e5 45%,#c4d2e0 55%,#cad7e4);border:1px solid #a1b1c2;border-radius:2px"></div>
<svg class="a" style="left:0;top:0" width="768" height="433" viewBox="0 0 768 433">
<rect x="251.6" y="125.9" width="6.6" height="2.4" rx="0.6" fill="#f2f4f6" stroke="#7d848c" stroke-width="0.9"/>
<rect x="272.5" y="123.60000000000001" width="6.1" height="4.8" fill="#f2f4f6" stroke="#7d848c" stroke-width="0.9"/>
<rect x="274.0" y="125.0" width="3.1" height="1.7" fill="#7d848c" opacity="0.85"/>
<path d="M293.0 123.60000000000001 L298.59999999999997 128.8 M298.59999999999997 123.60000000000001 L293.0 128.8" stroke="#7d848c" stroke-width="2.6"/>
<path d="M293.0 123.60000000000001 L298.59999999999997 128.8 M298.59999999999997 123.60000000000001 L293.0 128.8" stroke="#f2f4f6" stroke-width="1.3"/>
</svg>
<svg class="a" style="left:0;top:0" width="768" height="433" viewBox="0 0 768 433">
<line x1="53.4" y1="291.79999999999995" x2="279.59999999999997" y2="291.79999999999995" stroke="#555" stroke-width="0.8" stroke-dasharray="0.9 2.85"/>
<line x1="53.4" y1="266.7" x2="279.59999999999997" y2="266.7" stroke="#555" stroke-width="0.8" stroke-dasharray="0.9 2.85"/>
<line x1="53.4" y1="241.59999999999997" x2="279.59999999999997" y2="241.59999999999997" stroke="#555" stroke-width="0.8" stroke-dasharray="0.9 2.85"/>
<line x1="53.4" y1="216.49999999999997" x2="279.59999999999997" y2="216.49999999999997" stroke="#555" stroke-width="0.8" stroke-dasharray="0.9 2.85"/>
<line x1="53.4" y1="191.39999999999998" x2="279.59999999999997" y2="191.39999999999998" stroke="#555" stroke-width="0.8" stroke-dasharray="0.9 2.85"/>
<line x1="91.1" y1="191.39999999999998" x2="91.1" y2="316.9" stroke="#555" stroke-width="0.8" stroke-dasharray="0.9 2.85"/>
<line x1="128.8" y1="191.39999999999998" x2="128.8" y2="316.9" stroke="#555" stroke-width="0.8" stroke-dasharray="0.9 2.85"/>
<line x1="166.5" y1="191.39999999999998" x2="166.5" y2="316.9" stroke="#555" stroke-width="0.8" stroke-dasharray="0.9 2.85"/>
<line x1="204.20000000000002" y1="191.39999999999998" x2="204.20000000000002" y2="316.9" stroke="#555" stroke-width="0.8" stroke-dasharray="0.9 2.85"/>
<line x1="241.9" y1="191.39999999999998" x2="241.9" y2="316.9" stroke="#555" stroke-width="0.8" stroke-dasharray="0.9 2.85"/>
<line x1="279.59999999999997" y1="191.39999999999998" x2="279.59999999999997" y2="316.9" stroke="#555" stroke-width="0.8" stroke-dasharray="0.9 2.85"/>
<path d="M53.4 190.89999999999998 V316.9" stroke="#4a4a4a" stroke-width="1" fill="none"/>
<path d="M53.4 316.7 H279.59999999999997" stroke="#9c9c9c" stroke-width="1.1" fill="none"/>
<line x1="51.9" y1="316.9" x2="54.9" y2="316.9" stroke="#333" stroke-width="0.9"/>
<line x1="51.9" y1="304.34999999999997" x2="54.9" y2="304.34999999999997" stroke="#333" stroke-width="0.9"/>
<line x1="51.9" y1="291.79999999999995" x2="54.9" y2="291.79999999999995" stroke="#333" stroke-width="0.9"/>
<line x1="51.9" y1="279.25" x2="54.9" y2="279.25" stroke="#333" stroke-width="0.9"/>
<line x1="51.9" y1="266.7" x2="54.9" y2="266.7" stroke="#333" stroke-width="0.9"/>
<line x1="51.9" y1="254.14999999999998" x2="54.9" y2="254.14999999999998" stroke="#333" stroke-width="0.9"/>
<line x1="51.9" y1="241.59999999999997" x2="54.9" y2="241.59999999999997" stroke="#333" stroke-width="0.9"/>
<line x1="51.9" y1="229.04999999999998" x2="54.9" y2="229.04999999999998" stroke="#333" stroke-width="0.9"/>
<line x1="51.9" y1="216.49999999999997" x2="54.9" y2="216.49999999999997" stroke="#333" stroke-width="0.9"/>
<line x1="51.9" y1="203.95" x2="54.9" y2="203.95" stroke="#333" stroke-width="0.9"/>
<line x1="51.9" y1="191.39999999999998" x2="54.9" y2="191.39999999999998" stroke="#333" stroke-width="0.9"/>
<line x1="53.4" y1="315.4" x2="53.4" y2="318.4" stroke="#333" stroke-width="0.9"/>
<line x1="72.25" y1="315.4" x2="72.25" y2="318.4" stroke="#333" stroke-width="0.9"/>
<line x1="91.1" y1="315.4" x2="91.1" y2="318.4" stroke="#333" stroke-width="0.9"/>
<line x1="109.94999999999999" y1="315.4" x2="109.94999999999999" y2="318.4" stroke="#333" stroke-width="0.9"/>
<line x1="128.8" y1="315.4" x2="128.8" y2="318.4" stroke="#333" stroke-width="0.9"/>
<line x1="147.65" y1="315.4" x2="147.65" y2="318.4" stroke="#333" stroke-width="0.9"/>
<line x1="166.5" y1="315.4" x2="166.5" y2="318.4" stroke="#333" stroke-width="0.9"/>
<line x1="185.35" y1="315.4" x2="185.35" y2="318.4" stroke="#333" stroke-width="0.9"/>
<line x1="204.20000000000002" y1="315.4" x2="204.20000000000002" y2="318.4" stroke="#333" stroke-width="0.9"/>
<line x1="223.05" y1="315.4" x2="223.05" y2="318.4" stroke="#333" stroke-width="0.9"/>
<line x1="241.9" y1="315.4" x2="241.9" y2="318.4" stroke="#333" stroke-width="0.9"/>
<line x1="260.75" y1="315.4" x2="260.75" y2="318.4" stroke="#333" stroke-width="0.9"/>
<line x1="279.59999999999997" y1="315.4" x2="279.59999999999997" y2="318.4" stroke="#333" stroke-width="0.9"/>
<polyline points="53.40,196.68 53.59,196.70 53.78,196.72 53.97,196.73 54.15,196.74 54.34,196.74 54.53,196.74 54.72,196.74 54.91,196.73 55.10,196.72 55.28,196.70 55.47,196.68 55.66,196.66 55.85,196.64 56.04,196.62 56.23,196.59 56.42,196.57 56.60,196.54 56.79,196.51 56.98,196.49 57.17,196.47 57.36,196.44 57.55,196.42 57.74,196.40 57.92,196.39 58.11,196.37 58.30,196.36 58.49,196.35 58.68,196.35 58.87,196.35 59.05,196.35 59.24,196.35 59.43,196.35 59.62,196.36 59.81,196.37 60.00,196.39 60.19,196.40 60.37,196.42 60.56,196.44 60.75,196.46 60.94,196.48 61.13,196.50 61.32,196.53 61.51,196.55 61.69,196.57 61.88,196.60 62.07,196.62 62.26,196.64 62.45,196.66 62.64,196.68 62.83,196.69 63.01,196.71 63.20,196.72 63.39,196.73 63.58,196.74 63.77,196.75 63.96,196.76 64.14,196.76 64.33,196.76 64.52,196.76 64.71,196.76 64.90,196.76 65.09,196.76 65.28,196.76 65.46,196.76 65.65,196.75 65.84,196.75 66.03,196.75 66.22,196.74 66.41,196.74 66.59,196.74 66.78,196.75 66.97,196.75 67.16,196.76 67.35,196.76 67.54,196.78 67.73,196.79 67.91,196.81 68.10,196.83 68.29,196.85 68.48,196.88 68.67,196.91 68.86,196.94 69.05,196.98 69.23,197.02 69.42,197.06 69.61,197.10 69.80,197.15 69.99,197.20 70.18,197.25 70.36,197.31 70.55,197.37 70.74,197.42 70.93,197.48 71.12,197.54 71.31,197.60 71.50,197.66 71.68,197.71 71.87,197.77 72.06,197.82 72.25,197.87 72.44,197.92 72.63,197.97 72.82,198.01 73.00,198.05 73.19,198.09 73.38,198.12 73.57,198.14 73.76,198.16 73.95,198.18 74.13,198.19 74.32,198.19 74.51,198.19 74.70,198.18 74.89,198.17 75.08,198.15 75.27,198.12 75.45,198.09 75.64,198.06 75.83,198.01 76.02,197.97 76.21,197.92 76.40,197.86 76.59,197.80 76.77,197.74 76.96,197.68 77.15,197.61 77.34,197.54 77.53,197.47 77.72,197.40 77.91,197.33 78.09,197.26 78.28,197.20 78.47,197.13 78.66,197.07 78.85,197.01 79.04,196.95 79.22,196.90 79.41,196.86 79.60,196.82 79.79,196.79 79.98,196.77 80.17,196.75 80.36,196.74 80.54,196.75 80.73,196.76 80.92,196.78 81.11,196.81 81.30,196.85 81.49,196.90 81.67,196.96 81.86,197.03 82.05,197.11 82.24,197.20 82.43,197.30 82.62,197.41 82.81,197.53 82.99,197.66 83.18,197.80 83.37,197.94 83.56,198.09 83.75,198.25 83.94,198.41 84.13,198.58 84.31,198.75 84.50,198.93 84.69,199.11 84.88,199.29 85.07,199.47 85.26,199.65 85.44,199.83 85.63,200.01 85.82,200.19 86.01,200.36 86.20,200.52 86.39,200.69 86.58,200.84 86.76,200.99 86.95,201.13 87.14,201.26 87.33,201.38 87.52,201.50 87.71,201.60 87.90,201.69 88.08,201.77 88.27,201.83 88.46,201.89 88.65,201.93 88.84,201.96 89.03,201.97 89.22,201.97 89.40,201.96 89.59,201.93 89.78,201.89 89.97,201.84 90.16,201.77 90.35,201.69 90.53,201.60 90.72,201.49 90.91,201.37 91.10,201.24 91.29,201.10 91.48,200.95 91.67,200.78 91.85,200.61 92.04,200.43 92.23,200.25 92.42,200.06 92.61,199.86 92.80,199.66 92.98,199.45 93.17,199.25 93.36,199.04 93.55,198.84 93.74,198.63 93.93,198.43 94.12,198.24 94.30,198.05 94.49,197.87 94.68,197.69 94.87,197.53 95.06,197.38 95.25,197.24 95.44,197.12 95.62,197.01 95.81,196.92 96.00,196.85 96.19,196.79 96.38,196.76 96.57,196.74 96.75,196.75 96.94,196.78 97.13,196.83 97.32,196.90 97.51,197.00 97.70,197.12 97.89,197.27 98.07,197.43 98.26,197.62 98.45,197.83 98.64,198.07 98.83,198.32 99.02,198.60 99.21,198.89 99.39,199.21 99.58,199.54 99.77,199.89 99.96,200.25 100.15,200.63 100.34,201.01 100.53,201.41 100.71,201.82 100.90,202.24 101.09,202.66 101.28,203.09 101.47,203.52 101.66,203.96 101.84,204.39 102.03,204.82 102.22,205.25 102.41,205.67 102.60,206.09 102.79,206.50 102.98,206.89 103.16,207.28 103.35,207.66 103.54,208.02 103.73,208.37 103.92,208.70 104.11,209.02 104.30,209.31 104.48,209.59 104.67,209.85 104.86,210.09 105.05,210.30 105.24,210.49 105.43,210.66 105.61,210.81 105.80,210.93 105.99,211.03 106.18,211.10 106.37,211.14 106.56,211.16 106.75,211.15 106.93,211.12 107.12,211.05 107.31,210.96 107.50,210.85 107.69,210.71 107.88,210.54 108.06,210.34 108.25,210.12 108.44,209.87 108.63,209.60 108.82,209.30 109.01,208.98 109.20,208.64 109.38,208.27 109.57,207.88 109.76,207.48 109.95,207.05 110.14,206.61 110.33,206.15 110.52,205.67 110.70,205.19 110.89,204.69 111.08,204.19 111.27,203.68 111.46,203.17 111.65,202.66 111.84,202.14 112.02,201.64 112.21,201.14 112.40,200.65 112.59,200.17 112.78,199.72 112.97,199.28 113.15,198.87 113.34,198.48 113.53,198.12 113.72,197.80 113.91,197.52 114.10,197.27 114.29,197.07 114.47,196.91 114.66,196.81 114.85,196.75 115.04,196.75 115.23,196.80 115.42,196.92 115.60,197.09 115.79,197.32 115.98,197.61 116.17,197.96 116.36,198.37 116.55,198.84 116.74,199.37 116.92,199.96 117.11,200.60 117.30,201.29 117.49,202.04 117.68,202.84 117.87,203.68 118.06,204.56 118.24,205.48 118.43,206.44 118.62,207.42 118.81,208.44 119.00,209.48 119.19,210.54 119.38,211.61 119.56,212.70 119.75,213.79 119.94,214.89 120.13,215.99 120.32,217.08 120.51,218.17 120.69,219.25 120.88,220.32 121.07,221.37 121.26,222.41 121.45,223.42 121.64,224.41 121.83,225.37 122.01,226.31 122.20,227.22 122.39,228.09 122.58,228.93 122.77,229.74 122.96,230.51 123.15,231.24 123.33,231.94 123.52,232.59 123.71,233.20 123.90,233.77 124.09,234.30 124.28,234.78 124.46,235.22 124.65,235.61 124.84,235.95 125.03,236.25 125.22,236.50 125.41,236.69 125.60,236.84 125.78,236.93 125.97,236.97 126.16,236.96 126.35,236.89 126.54,236.77 126.73,236.58 126.91,236.34 127.10,236.04 127.29,235.68 127.48,235.26 127.67,234.77 127.86,234.22 128.05,233.60 128.23,232.91 128.42,232.15 128.61,231.32 128.80,230.42 128.99,229.45 129.18,228.40 129.37,227.28 129.55,226.08 129.74,224.81 129.93,223.47 130.12,222.06 130.31,220.58 130.50,219.04 130.69,217.43 130.87,215.78 131.06,214.08 131.25,212.35 131.44,210.61 131.63,208.85 131.82,207.12 132.00,205.42 132.19,203.78 132.38,202.23 132.57,200.81 132.76,199.54 132.95,198.46 133.14,197.62 133.32,197.04 133.51,196.76 133.70,196.82 133.89,197.25 134.08,198.07 134.27,199.30 134.46,200.94 134.64,202.99 134.83,205.43 135.02,208.24 135.21,211.39 135.40,214.84 135.59,218.54 135.77,222.43 135.96,226.47 136.15,230.60 136.34,234.78 136.53,238.95 136.72,243.09 136.91,247.14 137.09,251.09 137.28,254.91 137.47,258.58 137.66,262.09 137.85,265.44 138.04,268.60 138.22,271.60 138.41,274.42 138.60,277.07 138.79,279.55 138.98,281.88 139.17,284.06 139.36,286.09 139.54,287.98 139.73,289.75 139.92,291.40 140.11,292.93 140.30,294.36 140.49,295.70 140.68,296.94 140.86,298.09 141.05,299.17 141.24,300.18 141.43,301.11 141.62,301.99 141.81,302.80 142.00,303.56 142.18,304.28 142.37,304.94 142.56,305.57 142.75,306.15 142.94,306.70 143.13,307.21 143.31,307.69 143.50,308.14 143.69,308.56 143.88,308.96 144.07,309.33 144.26,309.68 144.45,310.02 144.63,310.33 144.82,310.62 145.01,310.90 145.20,311.16 145.39,311.41 145.58,311.64 145.76,311.86 145.95,312.07 146.14,312.27 146.33,312.46 146.52,312.64 146.71,312.80 146.90,312.96 147.08,313.12 147.27,313.26 147.46,313.40 147.65,313.53 147.84,313.65 148.03,313.77 148.22,313.88 148.40,313.99 148.59,314.09 148.78,314.19 148.97,314.28 149.16,314.37 149.35,314.45 149.53,314.53 149.72,314.61 149.91,314.69 150.10,314.76 150.29,314.82 150.48,314.89 150.67,314.95 150.85,315.01 151.04,315.07 151.23,315.12 151.42,315.17 151.61,315.22 151.80,315.27 151.99,315.32 152.17,315.36 152.36,315.41 152.55,315.45 152.74,315.49 152.93,315.52 153.12,315.56 153.31,315.60 153.49,315.63 153.68,315.66 153.87,315.69 154.06,315.72 154.25,315.75 154.44,315.78 154.62,315.81 154.81,315.84 155.00,315.86 155.19,315.89 155.38,315.91 155.57,315.93 155.76,315.95 155.94,315.98 156.13,316.00 156.32,316.00 156.51,316.00 156.70,316.00 156.89,316.00 157.07,316.00 157.26,316.00 157.45,316.00 157.64,316.00 157.83,316.00 158.02,316.00 158.21,316.00 158.39,316.00 158.58,316.00 158.77,316.00 158.96,316.00 159.15,316.00 159.34,316.00 159.53,316.00 159.71,316.00 159.90,316.00 160.09,316.00 160.28,316.00 160.47,316.00 160.66,316.00 160.84,316.00 161.03,316.00 161.22,316.00 161.41,316.00 161.60,316.00 161.79,316.00 161.98,316.00 162.16,316.00 162.35,316.00 162.54,316.00 162.73,316.00 162.92,316.00 163.11,316.00 163.30,316.00 163.48,316.00 163.67,316.00 163.86,316.00 164.05,316.00 164.24,316.00 164.43,316.00 164.62,316.00 164.80,316.00 164.99,316.00 165.18,316.00 165.37,316.00 165.56,316.00 165.75,316.00 165.93,316.00 166.12,316.00 166.31,316.00 166.50,316.00 166.69,316.00 166.88,316.00 167.07,316.00 167.25,316.00 167.44,316.00 167.63,316.00 167.82,316.00 168.01,316.00 168.20,316.00 168.38,316.00 168.57,316.00 168.76,316.00" stroke="#1a1a1a" stroke-width="0.95" fill="none"/>
<polyline points="207.40,316.00 207.59,316.00 207.78,316.00 207.97,316.00 208.16,316.00 208.35,316.00 208.54,316.00 208.72,316.00 208.91,316.00 209.10,316.00 209.29,316.00 209.48,316.00 209.67,316.00 209.86,316.00 210.04,316.00 210.23,316.00 210.42,316.00 210.61,316.00 210.80,316.00 210.99,316.00 211.17,316.00 211.36,316.00 211.55,316.00 211.74,316.00 211.93,316.00 212.12,316.00 212.31,316.00 212.49,316.00 212.68,316.00 212.87,316.00 213.06,316.00 213.25,316.00 213.44,316.00 213.62,316.00 213.81,316.00 214.00,316.00 214.19,316.00 214.38,316.00 214.57,316.00 214.76,316.00 214.94,316.00 215.13,316.00 215.32,316.00 215.51,316.00 215.70,316.00 215.89,316.00 216.08,316.00 216.26,316.00 216.45,316.00 216.64,316.00 216.83,316.00 217.02,316.00 217.21,316.00 217.40,316.00 217.58,316.00 217.77,316.00 217.96,316.00 218.15,316.00 218.34,316.00 218.53,316.00 218.71,316.00 218.90,316.00 219.09,316.00 219.28,316.00 219.47,316.00 219.66,316.00 219.85,316.00 220.03,316.00 220.22,316.00 220.41,316.00 220.60,316.00 220.79,316.00 220.98,316.00 221.17,316.00 221.35,316.00 221.54,316.00 221.73,316.00 221.92,316.00 222.11,316.00 222.30,316.00 222.48,316.00 222.67,316.00 222.86,316.00 223.05,316.00 223.24,316.00 223.43,316.00 223.62,316.00 223.80,316.00 223.99,316.00 224.18,316.00 224.37,316.00 224.56,316.00 224.75,316.00 224.94,316.00 225.12,316.00 225.31,316.00 225.50,315.99 225.69,315.98 225.88,315.96 226.07,315.95 226.25,315.94 226.44,315.92 226.63,315.91 226.82,315.89 227.01,315.88 227.20,315.86 227.39,315.85 227.57,315.83 227.76,315.81 227.95,315.80 228.14,315.78 228.33,315.76 228.52,315.74 228.71,315.73 228.89,315.71 229.08,315.69 229.27,315.67 229.46,315.65 229.65,315.63 229.84,315.61 230.02,315.59 230.21,315.57 230.40,315.54 230.59,315.52 230.78,315.50 230.97,315.48 231.16,315.45 231.34,315.43 231.53,315.40 231.72,315.38 231.91,315.35 232.10,315.32 232.29,315.30 232.47,315.27 232.66,315.24 232.85,315.21 233.04,315.18 233.23,315.15 233.42,315.12 233.61,315.09 233.79,315.06 233.98,315.02 234.17,314.99 234.36,314.95 234.55,314.92 234.74,314.88 234.93,314.84 235.11,314.80 235.30,314.77 235.49,314.72 235.68,314.68 235.87,314.64 236.06,314.60 236.25,314.55 236.43,314.51 236.62,314.46 236.81,314.41 237.00,314.37 237.19,314.32 237.38,314.26 237.56,314.21 237.75,314.16 237.94,314.10 238.13,314.05 238.32,313.99 238.51,313.93 238.70,313.87 238.88,313.80 239.07,313.74 239.26,313.67 239.45,313.60 239.64,313.54 239.83,313.46 240.02,313.39 240.20,313.31 240.39,313.24 240.58,313.16 240.77,313.08 240.96,312.99 241.15,312.91 241.33,312.82 241.52,312.73 241.71,312.63 241.90,312.54 242.09,312.44 242.28,312.34 242.47,312.23 242.65,312.12 242.84,312.01 243.03,311.90 243.22,311.78 243.41,311.66 243.60,311.54 243.78,311.41 243.97,311.28 244.16,311.14 244.35,311.00 244.54,310.86 244.73,310.71 244.92,310.56 245.10,310.40 245.29,310.24 245.48,310.07 245.67,309.90 245.86,309.73 246.05,309.54 246.24,309.35 246.42,309.16 246.61,308.96 246.80,308.75 246.99,308.54 247.18,308.32 247.37,308.09 247.56,307.86 247.74,307.62 247.93,307.37 248.12,307.11 248.31,306.84 248.50,306.57 248.69,306.28 248.87,305.99 249.06,305.69 249.25,305.37 249.44,305.05 249.63,304.71 249.82,304.37 250.01,304.01 250.19,303.64 250.38,303.25 250.57,302.86 250.76,302.45 250.95,302.02 251.14,301.58 251.33,301.13 251.51,300.66 251.70,300.17 251.89,299.67 252.08,299.15 252.27,298.61 252.46,298.05 252.64,297.47 252.83,296.87 253.02,296.25 253.21,295.60 253.40,294.94 253.59,294.25 253.78,293.54 253.96,292.80 254.15,292.03 254.34,291.24 254.53,290.42 254.72,289.57 254.91,288.69 255.09,287.78 255.28,286.84 255.47,285.87 255.66,284.86 255.85,283.82 256.04,282.74 256.23,281.63 256.41,280.48 256.60,279.29 256.79,278.06 256.98,276.80 257.17,275.49 257.36,274.14 257.55,272.75 257.73,271.32 257.92,269.85 258.11,268.33 258.30,266.78 258.49,265.18 258.68,263.53 258.87,261.85 259.05,260.13 259.24,258.36 259.43,256.56 259.62,254.72 259.81,252.85 260.00,250.94 260.18,249.00 260.37,247.03 260.56,245.03 260.75,243.02 260.94,240.98 261.13,238.93 261.32,236.87 261.50,234.80 261.69,232.74 261.88,230.67 262.07,228.62 262.26,226.58 262.45,224.57 262.63,222.58 262.82,220.63 263.01,218.72 263.20,216.85 263.39,215.04 263.58,213.29 263.77,211.60 263.95,209.99 264.14,208.45 264.33,206.99 264.52,205.62 264.71,204.34 264.90,203.15 265.09,202.06 265.27,201.07 265.46,200.19 265.65,199.40 265.84,198.72 266.03,198.14 266.22,197.66 266.40,197.29 266.59,197.01 266.78,196.83 266.97,196.75 267.16,196.76 267.35,196.86 267.54,197.04 267.72,197.30 267.91,197.64 268.10,198.06 268.29,198.54 268.48,199.08 268.67,199.68 268.86,200.33 269.04,201.04 269.23,201.79 269.42,202.58 269.61,203.41 269.80,204.26 269.99,205.15 270.18,206.06 270.36,207.00 270.55,207.95 270.74,208.91 270.93,209.89 271.12,210.87 271.31,211.86 271.49,212.86 271.68,213.85 271.87,214.85 272.06,215.84 272.25,216.83 272.44,217.81 272.63,218.79 272.81,219.76 273.00,220.71 273.19,221.66 273.38,222.59 273.57,223.52 273.76,224.42 273.94,225.32 274.13,226.20 274.32,227.06 274.51,227.91 274.70,228.75 274.89,229.57 275.08,230.37 275.26,231.16 275.45,231.93 275.64,232.68 275.83,233.42 276.02,234.14 276.21,234.84 276.40,235.53 276.58,236.21 276.77,236.86 276.96,237.50 277.15,238.13 277.34,238.73 277.53,239.33 277.71,239.90 277.90,240.47 278.09,241.01 278.28,241.55 278.47,242.06 278.66,242.57 278.85,243.06 279.03,243.53 279.22,243.99 279.41,244.44 279.60,244.88" stroke="#1a1a1a" stroke-width="0.95" fill="none"/>
</svg>
<div class="t" style="left:84.4px;top:143.8px;font-size:8.7px;color:#111;font-weight:700;font-family:'Liberation Serif',serif;">P208ShortWavelengthCut: Transmittance</div>
<div class="t" style="left:40.3px;top:172.6px;font-size:9px;color:#222;font-weight:400;font-family:'Liberation Serif',serif;">Transmittance (%)</div>
<div class="t" style="left:10.100000000000001px;width:40px;text-align:right;top:313.29999999999995px;font-size:9.4px;font-family:'Liberation Serif',serif;color:#222;transform:scaleX(0.87);transform-origin:100% 0">0</div>
<div class="t" style="left:10.100000000000001px;width:40px;text-align:right;top:288.19999999999993px;font-size:9.4px;font-family:'Liberation Serif',serif;color:#222;transform:scaleX(0.87);transform-origin:100% 0">20</div>
<div class="t" style="left:10.100000000000001px;width:40px;text-align:right;top:263.09999999999997px;font-size:9.4px;font-family:'Liberation Serif',serif;color:#222;transform:scaleX(0.87);transform-origin:100% 0">40</div>
<div class="t" style="left:10.100000000000001px;width:40px;text-align:right;top:237.99999999999997px;font-size:9.4px;font-family:'Liberation Serif',serif;color:#222;transform:scaleX(0.87);transform-origin:100% 0">60</div>
<div class="t" style="left:10.100000000000001px;width:40px;text-align:right;top:212.89999999999998px;font-size:9.4px;font-family:'Liberation Serif',serif;color:#222;transform:scaleX(0.87);transform-origin:100% 0">80</div>
<div class="t" style="left:10.100000000000001px;width:40px;text-align:right;top:187.79999999999998px;font-size:9.4px;font-family:'Liberation Serif',serif;color:#222;transform:scaleX(0.87);transform-origin:100% 0">100</div>
<div class="t" style="left:33.4px;width:40px;text-align:center;top:323.6px;font-size:9.4px;font-family:'Liberation Serif',serif;color:#222;transform:scaleX(0.87);transform-origin:50% 0">400</div>
<div class="t" style="left:71.1px;width:40px;text-align:center;top:323.6px;font-size:9.4px;font-family:'Liberation Serif',serif;color:#222;transform:scaleX(0.87);transform-origin:50% 0">500</div>
<div class="t" style="left:108.80000000000001px;width:40px;text-align:center;top:323.6px;font-size:9.4px;font-family:'Liberation Serif',serif;color:#222;transform:scaleX(0.87);transform-origin:50% 0">600</div>
<div class="t" style="left:146.5px;width:40px;text-align:center;top:323.6px;font-size:9.4px;font-family:'Liberation Serif',serif;color:#222;transform:scaleX(0.87);transform-origin:50% 0">700</div>
<div class="t" style="left:184.20000000000002px;width:40px;text-align:center;top:323.6px;font-size:9.4px;font-family:'Liberation Serif',serif;color:#222;transform:scaleX(0.87);transform-origin:50% 0">800</div>
<div class="t" style="left:221.9px;width:40px;text-align:center;top:323.6px;font-size:9.4px;font-family:'Liberation Serif',serif;color:#222;transform:scaleX(0.87);transform-origin:50% 0">900</div>
<div class="t" style="left:259.59999999999997px;width:40px;text-align:center;top:323.6px;font-size:9.4px;font-family:'Liberation Serif',serif;color:#222;transform:scaleX(0.87);transform-origin:50% 0">1000</div>
<div class="t" style="left:135.4px;top:336.4px;font-size:8.8px;color:#222;font-weight:400;font-family:'Liberation Serif',serif;">Wavelength (nm)</div>
<div class="a" style="left:390px;top:115px;width:294px;height:258px;background:#bcd4ec;border:1px solid #737b84;border-right-color:#3e8c9a;border-bottom-color:#3e8c9a;border-radius:5px 5px 0 0"></div>
<div class="a" style="left:391px;top:116px;width:292px;height:18px;background:linear-gradient(#94b0ce,#a9c3de 45%,#b9d1ea);border-radius:4px 4px 0 0"></div>
<div class="a" style="left:395px;top:134px;width:284px;height:233px;background:#f0f0f0;border-right:1px solid #8a8a8a;border-bottom:1px solid #8a8a8a"></div>
<svg class="a" style="left:396px;top:122px" width="10" height="9" viewBox="0 0 11 10">
<path d="M2.5 1.2 Q7.4 1.6 7.4 5.2 Q7.4 8.8 2.5 9" stroke="#f3d27a" stroke-width="1.3" fill="#fbeec0" fill-opacity="0.5"/>
<path d="M2 1 V9" stroke="#e2503c" stroke-width="0.9"/>
<path d="M2 0.2 L1 1.8 H3 Z" fill="#e2503c"/>
<path d="M2 5.8 H9" stroke="#e2503c" stroke-width="0.9"/>
<path d="M10.2 5.8 L8.6 4.8 V6.8 Z" fill="#e2503c"/></svg>
<div class="t" style="left:408.5px;top:123.37px;font-size:7.6px;color:#1e1e1e;font-weight:400;font-family:'Liberation Sans',sans-serif;transform:scale(0.925,1.0);transform-origin:0 6.43px;">P208ShortWavelengthCut</div>
<div class="a" style="left:617.2px;top:121.5px;width:19.2px;height:10.2px;background:linear-gradient(#d6e5f4,#c3d6ea 42%,#a5bfdb 52%,#a8c2dd 80%,#bcd2ea);border:1px solid #6c85a3;border-radius:2px"></div>
<div class="a" style="left:638.2px;top:121.5px;width:18.8px;height:10.2px;background:linear-gradient(#d6e5f4,#c3d6ea 42%,#a5bfdb 52%,#a8c2dd 80%,#bcd2ea);border:1px solid #6c85a3;border-radius:2px"></div>
<div class="a" style="left:658.9px;top:121.5px;width:18.8px;height:10.2px;background:linear-gradient(#eaa898,#dc8670 42%,#c8452c 52%,#c84a30 80%,#e07a5c);border:1px solid #7d3a2e;border-radius:2px"></div>
<svg class="a" style="left:0;top:0" width="768" height="433" viewBox="0 0 768 433">
<rect x="623.6" y="126.0" width="6.6" height="2.4" rx="0.6" fill="#ffffff" stroke="#3a4654" stroke-width="0.9"/>
<rect x="644.7" y="123.7" width="6.1" height="4.8" fill="#ffffff" stroke="#3a4654" stroke-width="0.9"/>
<rect x="646.2" y="125.1" width="3.1" height="1.7" fill="#3a4654" opacity="0.85"/>
<path d="M665.5 123.7 L671.1 128.9 M671.1 123.7 L665.5 128.9" stroke="#3a4654" stroke-width="2.6"/>
<path d="M665.5 123.7 L671.1 128.9 M671.1 123.7 L665.5 128.9" stroke="#ffffff" stroke-width="1.3"/>
</svg>
<div class="t" style="left:398.3px;top:137.04px;font-size:7.75px;color:#111;font-weight:700;font-family:'Liberation Sans',sans-serif;transform:scale(0.91,1.0);transform-origin:0 6.56px;"><u>D</u>esign</div>
<div class="t" style="left:431.5px;top:137.34px;font-size:7.4px;color:#222;font-weight:400;font-family:'Liberation Sans',sans-serif;transform:scale(0.845,1.0);transform-origin:0 6.26px;"><u>C</u>ontext</div>
<div class="t" style="left:464.2px;top:137.34px;font-size:7.4px;color:#222;font-weight:400;font-family:'Liberation Sans',sans-serif;transform:scale(0.87,1.0);transform-origin:0 6.26px;"><u>N</u>otes</div>
<div class="a" style="left:425.4px;top:136.6px;width:1.3px;height:8.4px;background:#5a5a5a"></div>
<svg class="a" style="left:422.9px;top:134px" width="4" height="4" viewBox="0 0 4 4"><path d="M0 0.3 Q2.2 0.5 3.4 3" stroke="#bdbdbd" stroke-width="0.8" fill="none"/></svg>
<div class="a" style="left:459.0px;top:136.6px;width:1.3px;height:8.4px;background:#5a5a5a"></div>
<svg class="a" style="left:456.5px;top:134px" width="4" height="4" viewBox="0 0 4 4"><path d="M0 0.3 Q2.2 0.5 3.4 3" stroke="#bdbdbd" stroke-width="0.8" fill="none"/></svg>
<div class="a" style="left:486.0px;top:136.6px;width:1.3px;height:8.4px;background:#5a5a5a"></div>
<svg class="a" style="left:483.5px;top:134px" width="4" height="4" viewBox="0 0 4 4"><path d="M0 0.3 Q2.2 0.5 3.4 3" stroke="#bdbdbd" stroke-width="0.8" fill="none"/></svg>
<div class="a" style="left:397px;top:148px;width:280px;height:21px;background:#f0f0f0"></div>
<div class="a" style="left:398px;top:150px;width:85.5px;height:18.2px;background:#fff"></div>
<div class="a" style="left:484.5px;top:150px;width:192px;height:8.6px;background:#fff"></div>
<div class="a" style="left:484.5px;top:158.8px;width:192px;height:9.4px;background:#000"></div>
<svg class="a" style="left:0;top:0" width="768" height="433" viewBox="0 0 768 433">
<line x1="397" y1="147.9" x2="677" y2="147.9" stroke="#5e5e5e" stroke-width="1.2"/>
<line x1="398" y1="149.4" x2="677" y2="149.4" stroke="#a0a0a0" stroke-width="0.9"/>
<line x1="397.4" y1="147.5" x2="397.4" y2="169" stroke="#7a7a7a" stroke-width="1"/>
<line x1="483.9" y1="147.5" x2="483.9" y2="168.5" stroke="#444" stroke-width="1.2"/>
<line x1="398" y1="158.6" x2="483.5" y2="158.6" stroke="#d6d6d6" stroke-width="0.8"/>
<line x1="397" y1="168.4" x2="677" y2="168.4" stroke="#a8a8a8" stroke-width="1"/>
</svg>
<div class="t" style="left:399.3px;top:151.59px;font-size:7.1px;color:#111;font-weight:400;font-family:'Liberation Sans',sans-serif;transform:scale(0.924,1.0);transform-origin:0 6.01px;">Incident Angle (deg)</div>
<div class="t" style="left:399.3px;top:160.59px;font-size:7.1px;color:#111;font-weight:400;font-family:'Liberation Sans',sans-serif;transform:scale(0.924,1.0);transform-origin:0 6.01px;">Reference Wavelength (nm)</div>
<div class="t" style="left:485.5px;top:151.59px;font-size:7.1px;color:#111;font-weight:400;font-family:'Liberation Sans',sans-serif;transform:scale(0.924,1.0);transform-origin:0 6.01px;">0.00</div>
<div class="t" style="left:485.5px;top:160.59px;font-size:7.1px;color:#fff;font-weight:400;font-family:'Liberation Sans',sans-serif;transform:scale(0.924,1.0);transform-origin:0 6.01px;">750.00</div>
<div class="a" style="left:397px;top:173px;width:280px;height:191px;background:#f0f0f0"></div>
<div class="a" style="left:409.6px;top:199.2px;width:257.0px;height:154.60000000000002px;background:#fff"></div>
<svg class="a" style="left:0;top:0" width="768" height="433" viewBox="0 0 768 433">
<line x1="397" y1="173.6" x2="677" y2="173.6" stroke="#8c8c8c" stroke-width="1.2"/>
<line x1="398.1" y1="173" x2="398.1" y2="364" stroke="#a4a4a4" stroke-width="1.5"/>
<line x1="409.6" y1="208.32" x2="666.6" y2="208.32" stroke="#c4c4c4" stroke-width="1"/>
<line x1="398.8" y1="208.32" x2="409.6" y2="208.32" stroke="#444" stroke-width="1.2"/>
<line x1="409.6" y1="217.44" x2="666.6" y2="217.44" stroke="#c4c4c4" stroke-width="1"/>
<line x1="398.8" y1="217.44" x2="409.6" y2="217.44" stroke="#444" stroke-width="1.2"/>
<line x1="409.6" y1="226.56" x2="666.6" y2="226.56" stroke="#c4c4c4" stroke-width="1"/>
<line x1="398.8" y1="226.56" x2="409.6" y2="226.56" stroke="#444" stroke-width="1.2"/>
<line x1="409.6" y1="235.67999999999998" x2="666.6" y2="235.67999999999998" stroke="#c4c4c4" stroke-width="1"/>
<line x1="398.8" y1="235.67999999999998" x2="409.6" y2="235.67999999999998" stroke="#444" stroke-width="1.2"/>
<line x1="409.6" y1="244.79999999999998" x2="666.6" y2="244.79999999999998" stroke="#c4c4c4" stroke-width="1"/>
<line x1="398.8" y1="244.79999999999998" x2="409.6" y2="244.79999999999998" stroke="#444" stroke-width="1.2"/>
<line x1="409.6" y1="253.92" x2="666.6" y2="253.92" stroke="#c4c4c4" stroke-width="1"/>
<line x1="398.8" y1="253.92" x2="409.6" y2="253.92" stroke="#444" stroke-width="1.2"/>
<line x1="409.6" y1="263.03999999999996" x2="666.6" y2="263.03999999999996" stroke="#c4c4c4" stroke-width="1"/>
<line x1="398.8" y1="263.03999999999996" x2="409.6" y2="263.03999999999996" stroke="#444" stroke-width="1.2"/>
<line x1="409.6" y1="272.15999999999997" x2="666.6" y2="272.15999999999997" stroke="#c4c4c4" stroke-width="1"/>
<line x1="398.8" y1="272.15999999999997" x2="409.6" y2="272.15999999999997" stroke="#444" stroke-width="1.2"/>
<line x1="409.6" y1="281.28" x2="666.6" y2="281.28" stroke="#c4c4c4" stroke-width="1"/>
<line x1="398.8" y1="281.28" x2="409.6" y2="281.28" stroke="#444" stroke-width="1.2"/>
<line x1="409.6" y1="290.4" x2="666.6" y2="290.4" stroke="#c4c4c4" stroke-width="1"/>
<line x1="398.8" y1="290.4" x2="409.6" y2="290.4" stroke="#444" stroke-width="1.2"/>
<line x1="409.6" y1="299.52" x2="666.6" y2="299.52" stroke="#c4c4c4" stroke-width="1"/>
<line x1="398.8" y1="299.52" x2="409.6" y2="299.52" stroke="#444" stroke-width="1.2"/>
<line x1="409.6" y1="308.64" x2="666.6" y2="308.64" stroke="#c4c4c4" stroke-width="1"/>
<line x1="398.8" y1="308.64" x2="409.6" y2="308.64" stroke="#444" stroke-width="1.2"/>
<line x1="409.6" y1="317.76" x2="666.6" y2="317.76" stroke="#c4c4c4" stroke-width="1"/>
<line x1="398.8" y1="317.76" x2="409.6" y2="317.76" stroke="#444" stroke-width="1.2"/>
<line x1="409.6" y1="326.88" x2="666.6" y2="326.88" stroke="#c4c4c4" stroke-width="1"/>
<line x1="398.8" y1="326.88" x2="409.6" y2="326.88" stroke="#444" stroke-width="1.2"/>
<line x1="409.6" y1="336.0" x2="666.6" y2="336.0" stroke="#c4c4c4" stroke-width="1"/>
<line x1="398.8" y1="336.0" x2="409.6" y2="336.0" stroke="#444" stroke-width="1.2"/>
<line x1="409.6" y1="345.12" x2="666.6" y2="345.12" stroke="#c4c4c4" stroke-width="1"/>
<line x1="398.8" y1="345.12" x2="409.6" y2="345.12" stroke="#444" stroke-width="1.2"/>
<line x1="442.8" y1="199.2" x2="442.8" y2="353.8" stroke="#c8c8c8" stroke-width="1"/>
<line x1="442.8" y1="174.1" x2="442.8" y2="199.2" stroke="#4a4a4a" stroke-width="1.2"/>
<line x1="501.7" y1="199.2" x2="501.7" y2="353.8" stroke="#c8c8c8" stroke-width="1"/>
<line x1="501.7" y1="174.1" x2="501.7" y2="199.2" stroke="#4a4a4a" stroke-width="1.2"/>
<line x1="542.3" y1="199.2" x2="542.3" y2="353.8" stroke="#c8c8c8" stroke-width="1"/>
<line x1="542.3" y1="174.1" x2="542.3" y2="199.2" stroke="#4a4a4a" stroke-width="1.2"/>
<line x1="583.7" y1="199.2" x2="583.7" y2="353.8" stroke="#c8c8c8" stroke-width="1"/>
<line x1="583.7" y1="174.1" x2="583.7" y2="199.2" stroke="#4a4a4a" stroke-width="1.2"/>
<line x1="624.8" y1="199.2" x2="624.8" y2="353.8" stroke="#c8c8c8" stroke-width="1"/>
<line x1="624.8" y1="174.1" x2="624.8" y2="199.2" stroke="#4a4a4a" stroke-width="1.2"/>
<line x1="666.6" y1="199.2" x2="666.6" y2="353.8" stroke="#c8c8c8" stroke-width="1"/>
<line x1="666.6" y1="174.1" x2="666.6" y2="199.2" stroke="#4a4a4a" stroke-width="1.2"/>
<line x1="442.8" y1="353.8" x2="442.8" y2="363.5" stroke="#555" stroke-width="1.2"/>
<line x1="501.7" y1="353.8" x2="501.7" y2="363.5" stroke="#555" stroke-width="1.2"/>
<line x1="542.3" y1="353.8" x2="542.3" y2="363.5" stroke="#555" stroke-width="1.2"/>
<line x1="583.7" y1="353.8" x2="583.7" y2="363.5" stroke="#555" stroke-width="1.2"/>
<line x1="624.8" y1="353.8" x2="624.8" y2="363.5" stroke="#555" stroke-width="1.2"/>
<line x1="409.6" y1="174.1" x2="409.6" y2="363.5" stroke="#2a2a2a" stroke-width="1.2"/>
<line x1="397.7" y1="199.2" x2="666.6" y2="199.2" stroke="#2a2a2a" stroke-width="1.2"/>
<line x1="397.7" y1="353.8" x2="666.6" y2="353.8" stroke="#3a3a3a" stroke-width="1.4"/>
<line x1="397.7" y1="363.3" x2="666.6" y2="363.3" stroke="#c8c8c8" stroke-width="1"/>
<path d="M667 301 H676.3 V185" stroke="#a0a0a0" stroke-width="1" fill="none"/>
<path d="M402.8 265.43999999999994 L406.6 267.84 L402.8 270.23999999999995 Z" fill="#000"/>
</svg>
<div class="t" style="left:409.6px;width:33.19999999999999px;text-align:center;top:183.11px;font-size:7.2px;color:#2a2a2a;font-weight:400;font-family:'Liberation Sans',sans-serif;transform:scale(0.89,1.08);transform-origin:50% 6.09px;">Layer</div>
<div class="t" style="left:442.8px;width:58.89999999999998px;text-align:center;top:183.11px;font-size:7.2px;color:#2a2a2a;font-weight:400;font-family:'Liberation Sans',sans-serif;transform:scale(0.89,1.08);transform-origin:50% 6.09px;">Material</div>
<div class="t" style="left:501.7px;width:40.599999999999966px;text-align:center;top:179.18px;font-size:7.2px;color:#2a2a2a;font-weight:400;font-family:'Liberation Sans',sans-serif;transform:scale(0.89,1.08);transform-origin:50% 6.09px;">Refractive</div>
<div class="t" style="left:501.7px;width:40.599999999999966px;text-align:center;top:187.03px;font-size:7.2px;color:#2a2a2a;font-weight:400;font-family:'Liberation Sans',sans-serif;transform:scale(0.89,1.08);transform-origin:50% 6.09px;">Index</div>
<div class="t" style="left:542.3px;width:41.40000000000009px;text-align:center;top:179.18px;font-size:7.2px;color:#2a2a2a;font-weight:400;font-family:'Liberation Sans',sans-serif;transform:scale(0.89,1.08);transform-origin:50% 6.09px;">Extinction</div>
<div class="t" style="left:542.3px;width:41.40000000000009px;text-align:center;top:187.03px;font-size:7.2px;color:#2a2a2a;font-weight:400;font-family:'Liberation Sans',sans-serif;transform:scale(0.89,1.08);transform-origin:50% 6.09px;">Coefficient</div>
<div class="t" style="left:583.7px;width:41.09999999999991px;text-align:center;top:175.26px;font-size:7.2px;color:#2a2a2a;font-weight:400;font-family:'Liberation Sans',sans-serif;transform:scale(0.89,1.08);transform-origin:50% 6.09px;">Optical</div>
<div class="t" style="left:583.7px;width:41.09999999999991px;text-align:center;top:183.11px;font-size:7.2px;color:#2a2a2a;font-weight:400;font-family:'Liberation Sans',sans-serif;transform:scale(0.89,1.08);transform-origin:50% 6.09px;">Thickness</div>
<div class="t" style="left:583.7px;width:41.09999999999991px;text-align:center;top:190.96px;font-size:7.2px;color:#2a2a2a;font-weight:400;font-family:'Liberation Sans',sans-serif;transform:scale(0.89,1.08);transform-origin:50% 6.09px;">(FWOT)</div>
<div class="t" style="left:624.8px;width:41.80000000000007px;text-align:center;top:175.26px;font-size:7.2px;color:#2a2a2a;font-weight:400;font-family:'Liberation Sans',sans-serif;transform:scale(0.89,1.08);transform-origin:50% 6.09px;">Physical</div>
<div class="t" style="left:624.8px;width:41.80000000000007px;text-align:center;top:183.11px;font-size:7.2px;color:#2a2a2a;font-weight:400;font-family:'Liberation Sans',sans-serif;transform:scale(0.89,1.08);transform-origin:50% 6.09px;">Thickness</div>
<div class="t" style="left:624.8px;width:41.80000000000007px;text-align:center;top:190.96px;font-size:7.2px;color:#2a2a2a;font-weight:400;font-family:'Liberation Sans',sans-serif;transform:scale(0.89,1.08);transform-origin:50% 6.09px;">(nm)</div>
<div class="t" style="left:409.6px;width:32.19999999999999px;text-align:right;top:200.32px;font-size:7.3px;color:#2a2a2a;font-weight:400;font-family:'Liberation Sans',sans-serif;transform:scale(0.89,1.1);transform-origin:100% 6.18px;">Medium</div>
<div class="t" style="left:444.2px;top:200.32px;font-size:7.3px;color:#2a2a2a;font-weight:400;font-family:'Liberation Sans',sans-serif;transform:scale(0.88,1.1);transform-origin:0 6.18px;font-style:italic;">Air</div>
<div class="t" style="left:501.7px;width:39.599999999999966px;text-align:right;top:200.32px;font-size:7.3px;color:#2a2a2a;font-weight:400;font-family:'Liberation Sans',sans-serif;transform:scale(0.89,1.1);transform-origin:100% 6.18px;">1.00000</div>
<div class="t" style="left:542.3px;width:40.40000000000009px;text-align:right;top:200.32px;font-size:7.3px;color:#2a2a2a;font-weight:400;font-family:'Liberation Sans',sans-serif;transform:scale(0.89,1.1);transform-origin:100% 6.18px;">0.00000</div>
<div class="t" style="left:409.6px;width:32.19999999999999px;text-align:right;top:209.44px;font-size:7.3px;color:#2a2a2a;font-weight:400;font-family:'Liberation Sans',sans-serif;transform:scale(0.89,1.1);transform-origin:100% 6.18px;">1</div>
<div class="t" style="left:444.2px;top:209.44px;font-size:7.3px;color:#2a2a2a;font-weight:400;font-family:'Liberation Sans',sans-serif;transform:scale(0.88,1.1);transform-origin:0 6.18px;">Na3AlF6</div>
<div class="t" style="left:501.7px;width:39.599999999999966px;text-align:right;top:209.44px;font-size:7.3px;color:#2a2a2a;font-weight:400;font-family:'Liberation Sans',sans-serif;transform:scale(0.89,1.1);transform-origin:100% 6.18px;">1.35000</div>
<div class="t" style="left:542.3px;width:40.40000000000009px;text-align:right;top:209.44px;font-size:7.3px;color:#2a2a2a;font-weight:400;font-family:'Liberation Sans',sans-serif;transform:scale(0.89,1.1);transform-origin:100% 6.18px;">0.00000</div>
<div class="t" style="left:583.7px;width:40.09999999999991px;text-align:right;top:209.44px;font-size:7.3px;color:#2a2a2a;font-weight:400;font-family:'Liberation Sans',sans-serif;transform:scale(0.89,1.1);transform-origin:100% 6.18px;">0.12500000</div>
<div class="t" style="left:624.8px;width:40.80000000000007px;text-align:right;top:209.44px;font-size:7.3px;color:#2a2a2a;font-weight:400;font-family:'Liberation Sans',sans-serif;transform:scale(0.89,1.1);transform-origin:100% 6.18px;">69.44</div>
<div class="t" style="left:409.6px;width:32.19999999999999px;text-align:right;top:218.56px;font-size:7.3px;color:#2a2a2a;font-weight:400;font-family:'Liberation Sans',sans-serif;transform:scale(0.89,1.1);transform-origin:100% 6.18px;">2</div>
<div class="t" style="left:444.2px;top:218.56px;font-size:7.3px;color:#2a2a2a;font-weight:400;font-family:'Liberation Sans',sans-serif;transform:scale(0.88,1.1);transform-origin:0 6.18px;font-style:italic;">ZnS</div>
<div class="t" style="left:501.7px;width:39.599999999999966px;text-align:right;top:218.56px;font-size:7.3px;color:#2a2a2a;font-weight:400;font-family:'Liberation Sans',sans-serif;transform:scale(0.89,1.1);transform-origin:100% 6.18px;">2.35000</div>
<div class="t" style="left:542.3px;width:40.40000000000009px;text-align:right;top:218.56px;font-size:7.3px;color:#2a2a2a;font-weight:400;font-family:'Liberation Sans',sans-serif;transform:scale(0.89,1.1);transform-origin:100% 6.18px;">0.00000</div>
<div class="t" style="left:583.7px;width:40.09999999999991px;text-align:right;top:218.56px;font-size:7.3px;color:#2a2a2a;font-weight:400;font-family:'Liberation Sans',sans-serif;transform:scale(0.89,1.1);transform-origin:100% 6.18px;">0.25000000</div>
<div class="t" style="left:624.8px;width:40.80000000000007px;text-align:right;top:218.56px;font-size:7.3px;color:#2a2a2a;font-weight:400;font-family:'Liberation Sans',sans-serif;transform:scale(0.89,1.1);transform-origin:100% 6.18px;">79.79</div>
<div class="t" style="left:409.6px;width:32.19999999999999px;text-align:right;top:227.68px;font-size:7.3px;color:#2a2a2a;font-weight:400;font-family:'Liberation Sans',sans-serif;transform:scale(0.89,1.1);transform-origin:100% 6.18px;">3</div>
<div class="t" style="left:444.2px;top:227.68px;font-size:7.3px;color:#2a2a2a;font-weight:400;font-family:'Liberation Sans',sans-serif;transform:scale(0.88,1.1);transform-origin:0 6.18px;">Na3AlF6</div>
<div class="t" style="left:501.7px;width:39.599999999999966px;text-align:right;top:227.68px;font-size:7.3px;color:#2a2a2a;font-weight:400;font-family:'Liberation Sans',sans-serif;transform:scale(0.89,1.1);transform-origin:100% 6.18px;">1.35000</div>
<div class="t" style="left:542.3px;width:40.40000000000009px;text-align:right;top:227.68px;font-size:7.3px;color:#2a2a2a;font-weight:400;font-family:'Liberation Sans',sans-serif;transform:scale(0.89,1.1);transform-origin:100% 6.18px;">0.00000</div>
<div class="t" style="left:583.7px;width:40.09999999999991px;text-align:right;top:227.68px;font-size:7.3px;color:#2a2a2a;font-weight:400;font-family:'Liberation Sans',sans-serif;transform:scale(0.89,1.1);transform-origin:100% 6.18px;">0.12500000</div>
<div class="t" style="left:624.8px;width:40.80000000000007px;text-align:right;top:227.68px;font-size:7.3px;color:#2a2a2a;font-weight:400;font-family:'Liberation Sans',sans-serif;transform:scale(0.89,1.1);transform-origin:100% 6.18px;">69.44</div>
<div class="t" style="left:409.6px;width:32.19999999999999px;text-align:right;top:236.80px;font-size:7.3px;color:#2a2a2a;font-weight:400;font-family:'Liberation Sans',sans-serif;transform:scale(0.89,1.1);transform-origin:100% 6.18px;">4</div>
<div class="t" style="left:444.2px;top:236.80px;font-size:7.3px;color:#2a2a2a;font-weight:400;font-family:'Liberation Sans',sans-serif;transform:scale(0.88,1.1);transform-origin:0 6.18px;">Na3AlF6</div>
<div class="t" style="left:501.7px;width:39.599999999999966px;text-align:right;top:236.80px;font-size:7.3px;color:#2a2a2a;font-weight:400;font-family:'Liberation Sans',sans-serif;transform:scale(0.89,1.1);transform-origin:100% 6.18px;">1.35000</div>
<div class="t" style="left:542.3px;width:40.40000000000009px;text-align:right;top:236.80px;font-size:7.3px;color:#2a2a2a;font-weight:400;font-family:'Liberation Sans',sans-serif;transform:scale(0.89,1.1);transform-origin:100% 6.18px;">0.00000</div>
<div class="t" style="left:583.7px;width:40.09999999999991px;text-align:right;top:236.80px;font-size:7.3px;color:#2a2a2a;font-weight:400;font-family:'Liberation Sans',sans-serif;transform:scale(0.89,1.1);transform-origin:100% 6.18px;">0.12500000</div>
<div class="t" style="left:624.8px;width:40.80000000000007px;text-align:right;top:236.80px;font-size:7.3px;color:#2a2a2a;font-weight:400;font-family:'Liberation Sans',sans-serif;transform:scale(0.89,1.1);transform-origin:100% 6.18px;">69.44</div>
<div class="t" style="left:409.6px;width:32.19999999999999px;text-align:right;top:245.92px;font-size:7.3px;color:#2a2a2a;font-weight:400;font-family:'Liberation Sans',sans-serif;transform:scale(0.89,1.1);transform-origin:100% 6.18px;">5</div>
<div class="t" style="left:444.2px;top:245.92px;font-size:7.3px;color:#2a2a2a;font-weight:400;font-family:'Liberation Sans',sans-serif;transform:scale(0.88,1.1);transform-origin:0 6.18px;font-style:italic;">ZnS</div>
<div class="t" style="left:501.7px;width:39.599999999999966px;text-align:right;top:245.92px;font-size:7.3px;color:#2a2a2a;font-weight:400;font-family:'Liberation Sans',sans-serif;transform:scale(0.89,1.1);transform-origin:100% 6.18px;">2.35000</div>
<div class="t" style="left:542.3px;width:40.40000000000009px;text-align:right;top:245.92px;font-size:7.3px;color:#2a2a2a;font-weight:400;font-family:'Liberation Sans',sans-serif;transform:scale(0.89,1.1);transform-origin:100% 6.18px;">0.00000</div>
<div class="t" style="left:583.7px;width:40.09999999999991px;text-align:right;top:245.92px;font-size:7.3px;color:#2a2a2a;font-weight:400;font-family:'Liberation Sans',sans-serif;transform:scale(0.89,1.1);transform-origin:100% 6.18px;">0.25000000</div>
<div class="t" style="left:624.8px;width:40.80000000000007px;text-align:right;top:245.92px;font-size:7.3px;color:#2a2a2a;font-weight:400;font-family:'Liberation Sans',sans-serif;transform:scale(0.89,1.1);transform-origin:100% 6.18px;">79.79</div>
<div class="t" style="left:409.6px;width:32.19999999999999px;text-align:right;top:255.04px;font-size:7.3px;color:#2a2a2a;font-weight:400;font-family:'Liberation Sans',sans-serif;transform:scale(0.89,1.1);transform-origin:100% 6.18px;">6</div>
<div class="t" style="left:444.2px;top:255.04px;font-size:7.3px;color:#2a2a2a;font-weight:400;font-family:'Liberation Sans',sans-serif;transform:scale(0.88,1.1);transform-origin:0 6.18px;">Na3AlF6</div>
<div class="t" style="left:501.7px;width:39.599999999999966px;text-align:right;top:255.04px;font-size:7.3px;color:#2a2a2a;font-weight:400;font-family:'Liberation Sans',sans-serif;transform:scale(0.89,1.1);transform-origin:100% 6.18px;">1.35000</div>
<div class="t" style="left:542.3px;width:40.40000000000009px;text-align:right;top:255.04px;font-size:7.3px;color:#2a2a2a;font-weight:400;font-family:'Liberation Sans',sans-serif;transform:scale(0.89,1.1);transform-origin:100% 6.18px;">0.00000</div>
<div class="t" style="left:583.7px;width:40.09999999999991px;text-align:right;top:255.04px;font-size:7.3px;color:#2a2a2a;font-weight:400;font-family:'Liberation Sans',sans-serif;transform:scale(0.89,1.1);transform-origin:100% 6.18px;">0.12500000</div>
<div class="t" style="left:624.8px;width:40.80000000000007px;text-align:right;top:255.04px;font-size:7.3px;color:#2a2a2a;font-weight:400;font-family:'Liberation Sans',sans-serif;transform:scale(0.89,1.1);transform-origin:100% 6.18px;">69.44</div>
<div class="t" style="left:409.6px;width:32.19999999999999px;text-align:right;top:264.16px;font-size:7.3px;color:#2a2a2a;font-weight:400;font-family:'Liberation Sans',sans-serif;transform:scale(0.89,1.1);transform-origin:100% 6.18px;">7</div>
<div class="t" style="left:444.2px;top:264.16px;font-size:7.3px;color:#2a2a2a;font-weight:400;font-family:'Liberation Sans',sans-serif;transform:scale(0.88,1.1);transform-origin:0 6.18px;">Na3AlF6</div>
<div class="t" style="left:501.7px;width:39.599999999999966px;text-align:right;top:264.16px;font-size:7.3px;color:#2a2a2a;font-weight:400;font-family:'Liberation Sans',sans-serif;transform:scale(0.89,1.1);transform-origin:100% 6.18px;">1.35000</div>
<div class="t" style="left:542.3px;width:40.40000000000009px;text-align:right;top:264.16px;font-size:7.3px;color:#2a2a2a;font-weight:400;font-family:'Liberation Sans',sans-serif;transform:scale(0.89,1.1);transform-origin:100% 6.18px;">0.00000</div>
<div class="t" style="left:583.7px;width:40.09999999999991px;text-align:right;top:264.16px;font-size:7.3px;color:#2a2a2a;font-weight:400;font-family:'Liberation Sans',sans-serif;transform:scale(0.89,1.1);transform-origin:100% 6.18px;">0.12500000</div>
<div class="t" style="left:624.8px;width:40.80000000000007px;text-align:right;top:264.16px;font-size:7.3px;color:#2a2a2a;font-weight:400;font-family:'Liberation Sans',sans-serif;transform:scale(0.89,1.1);transform-origin:100% 6.18px;">69.44</div>
<div class="t" style="left:409.6px;width:32.19999999999999px;text-align:right;top:273.28px;font-size:7.3px;color:#2a2a2a;font-weight:400;font-family:'Liberation Sans',sans-serif;transform:scale(0.89,1.1);transform-origin:100% 6.18px;">8</div>
<div class="t" style="left:444.2px;top:273.28px;font-size:7.3px;color:#2a2a2a;font-weight:400;font-family:'Liberation Sans',sans-serif;transform:scale(0.88,1.1);transform-origin:0 6.18px;font-style:italic;">ZnS</div>
<div class="t" style="left:501.7px;width:39.599999999999966px;text-align:right;top:273.28px;font-size:7.3px;color:#2a2a2a;font-weight:400;font-family:'Liberation Sans',sans-serif;transform:scale(0.89,1.1);transform-origin:100% 6.18px;">2.35000</div>
<div class="t" style="left:542.3px;width:40.40000000000009px;text-align:right;top:273.28px;font-size:7.3px;color:#2a2a2a;font-weight:400;font-family:'Liberation Sans',sans-serif;transform:scale(0.89,1.1);transform-origin:100% 6.18px;">0.00000</div>
<div class="t" style="left:583.7px;width:40.09999999999991px;text-align:right;top:273.28px;font-size:7.3px;color:#2a2a2a;font-weight:400;font-family:'Liberation Sans',sans-serif;transform:scale(0.89,1.1);transform-origin:100% 6.18px;">0.25000000</div>
<div class="t" style="left:624.8px;width:40.80000000000007px;text-align:right;top:273.28px;font-size:7.3px;color:#2a2a2a;font-weight:400;font-family:'Liberation Sans',sans-serif;transform:scale(0.89,1.1);transform-origin:100% 6.18px;">79.79</div>
<div class="t" style="left:409.6px;width:32.19999999999999px;text-align:right;top:282.40px;font-size:7.3px;color:#2a2a2a;font-weight:400;font-family:'Liberation Sans',sans-serif;transform:scale(0.89,1.1);transform-origin:100% 6.18px;">9</div>
<div class="t" style="left:444.2px;top:282.40px;font-size:7.3px;color:#2a2a2a;font-weight:400;font-family:'Liberation Sans',sans-serif;transform:scale(0.88,1.1);transform-origin:0 6.18px;">Na3AlF6</div>
<div class="t" style="left:501.7px;width:39.599999999999966px;text-align:right;top:282.40px;font-size:7.3px;color:#2a2a2a;font-weight:400;font-family:'Liberation Sans',sans-serif;transform:scale(0.89,1.1);transform-origin:100% 6.18px;">1.35000</div>
<div class="t" style="left:542.3px;width:40.40000000000009px;text-align:right;top:282.40px;font-size:7.3px;color:#2a2a2a;font-weight:400;font-family:'Liberation Sans',sans-serif;transform:scale(0.89,1.1);transform-origin:100% 6.18px;">0.00000</div>
<div class="t" style="left:583.7px;width:40.09999999999991px;text-align:right;top:282.40px;font-size:7.3px;color:#2a2a2a;font-weight:400;font-family:'Liberation Sans',sans-serif;transform:scale(0.89,1.1);transform-origin:100% 6.18px;">0.12500000</div>
<div class="t" style="left:624.8px;width:40.80000000000007px;text-align:right;top:282.40px;font-size:7.3px;color:#2a2a2a;font-weight:400;font-family:'Liberation Sans',sans-serif;transform:scale(0.89,1.1);transform-origin:100% 6.18px;">69.44</div>
<div class="t" style="left:409.6px;width:32.19999999999999px;text-align:right;top:291.52px;font-size:7.3px;color:#2a2a2a;font-weight:400;font-family:'Liberation Sans',sans-serif;transform:scale(0.89,1.1);transform-origin:100% 6.18px;">10</div>
<div class="t" style="left:444.2px;top:291.52px;font-size:7.3px;color:#2a2a2a;font-weight:400;font-family:'Liberation Sans',sans-serif;transform:scale(0.88,1.1);transform-origin:0 6.18px;">Na3AlF6</div>
<div class="t" style="left:501.7px;width:39.599999999999966px;text-align:right;top:291.52px;font-size:7.3px;color:#2a2a2a;font-weight:400;font-family:'Liberation Sans',sans-serif;transform:scale(0.89,1.1);transform-origin:100% 6.18px;">1.35000</div>
<div class="t" style="left:542.3px;width:40.40000000000009px;text-align:right;top:291.52px;font-size:7.3px;color:#2a2a2a;font-weight:400;font-family:'Liberation Sans',sans-serif;transform:scale(0.89,1.1);transform-origin:100% 6.18px;">0.00000</div>
<div class="t" style="left:583.7px;width:40.09999999999991px;text-align:right;top:291.52px;font-size:7.3px;color:#2a2a2a;font-weight:400;font-family:'Liberation Sans',sans-serif;transform:scale(0.89,1.1);transform-origin:100% 6.18px;">0.12500000</div>
<div class="t" style="left:624.8px;width:40.80000000000007px;text-align:right;top:291.52px;font-size:7.3px;color:#2a2a2a;font-weight:400;font-family:'Liberation Sans',sans-serif;transform:scale(0.89,1.1);transform-origin:100% 6.18px;">69.44</div>
<div class="t" style="left:409.6px;width:32.19999999999999px;text-align:right;top:300.64px;font-size:7.3px;color:#2a2a2a;font-weight:400;font-family:'Liberation Sans',sans-serif;transform:scale(0.89,1.1);transform-origin:100% 6.18px;">11</div>
<div class="t" style="left:444.2px;top:300.64px;font-size:7.3px;color:#2a2a2a;font-weight:400;font-family:'Liberation Sans',sans-serif;transform:scale(0.88,1.1);transform-origin:0 6.18px;font-style:italic;">ZnS</div>
<div class="t" style="left:501.7px;width:39.599999999999966px;text-align:right;top:300.64px;font-size:7.3px;color:#2a2a2a;font-weight:400;font-family:'Liberation Sans',sans-serif;transform:scale(0.89,1.1);transform-origin:100% 6.18px;">2.35000</div>
<div class="t" style="left:542.3px;width:40.40000000000009px;text-align:right;top:300.64px;font-size:7.3px;color:#2a2a2a;font-weight:400;font-family:'Liberation Sans',sans-serif;transform:scale(0.89,1.1);transform-origin:100% 6.18px;">0.00000</div>
<div class="t" style="left:583.7px;width:40.09999999999991px;text-align:right;top:300.64px;font-size:7.3px;color:#2a2a2a;font-weight:400;font-family:'Liberation Sans',sans-serif;transform:scale(0.89,1.1);transform-origin:100% 6.18px;">0.25000000</div>
<div class="t" style="left:624.8px;width:40.80000000000007px;text-align:right;top:300.64px;font-size:7.3px;color:#2a2a2a;font-weight:400;font-family:'Liberation Sans',sans-serif;transform:scale(0.89,1.1);transform-origin:100% 6.18px;">79.79</div>
<div class="t" style="left:409.6px;width:32.19999999999999px;text-align:right;top:309.76px;font-size:7.3px;color:#2a2a2a;font-weight:400;font-family:'Liberation Sans',sans-serif;transform:scale(0.89,1.1);transform-origin:100% 6.18px;">12</div>
<div class="t" style="left:444.2px;top:309.76px;font-size:7.3px;color:#2a2a2a;font-weight:400;font-family:'Liberation Sans',sans-serif;transform:scale(0.88,1.1);transform-origin:0 6.18px;">Na3AlF6</div>
<div class="t" style="left:501.7px;width:39.599999999999966px;text-align:right;top:309.76px;font-size:7.3px;color:#2a2a2a;font-weight:400;font-family:'Liberation Sans',sans-serif;transform:scale(0.89,1.1);transform-origin:100% 6.18px;">1.35000</div>
<div class="t" style="left:542.3px;width:40.40000000000009px;text-align:right;top:309.76px;font-size:7.3px;color:#2a2a2a;font-weight:400;font-family:'Liberation Sans',sans-serif;transform:scale(0.89,1.1);transform-origin:100% 6.18px;">0.00000</div>
<div class="t" style="left:583.7px;width:40.09999999999991px;text-align:right;top:309.76px;font-size:7.3px;color:#2a2a2a;font-weight:400;font-family:'Liberation Sans',sans-serif;transform:scale(0.89,1.1);transform-origin:100% 6.18px;">0.12500000</div>
<div class="t" style="left:624.8px;width:40.80000000000007px;text-align:right;top:309.76px;font-size:7.3px;color:#2a2a2a;font-weight:400;font-family:'Liberation Sans',sans-serif;transform:scale(0.89,1.1);transform-origin:100% 6.18px;">69.44</div>
<div class="t" style="left:409.6px;width:32.19999999999999px;text-align:right;top:318.88px;font-size:7.3px;color:#2a2a2a;font-weight:400;font-family:'Liberation Sans',sans-serif;transform:scale(0.89,1.1);transform-origin:100% 6.18px;">13</div>
<div class="t" style="left:444.2px;top:318.88px;font-size:7.3px;color:#2a2a2a;font-weight:400;font-family:'Liberation Sans',sans-serif;transform:scale(0.88,1.1);transform-origin:0 6.18px;">Na3AlF6</div>
<div class="t" style="left:501.7px;width:39.599999999999966px;text-align:right;top:318.88px;font-size:7.3px;color:#2a2a2a;font-weight:400;font-family:'Liberation Sans',sans-serif;transform:scale(0.89,1.1);transform-origin:100% 6.18px;">1.35000</div>
<div class="t" style="left:542.3px;width:40.40000000000009px;text-align:right;top:318.88px;font-size:7.3px;color:#2a2a2a;font-weight:400;font-family:'Liberation Sans',sans-serif;transform:scale(0.89,1.1);transform-origin:100% 6.18px;">0.00000</div>
<div class="t" style="left:583.7px;width:40.09999999999991px;text-align:right;top:318.88px;font-size:7.3px;color:#2a2a2a;font-weight:400;font-family:'Liberation Sans',sans-serif;transform:scale(0.89,1.1);transform-origin:100% 6.18px;">0.12500000</div>
<div class="t" style="left:624.8px;width:40.80000000000007px;text-align:right;top:318.88px;font-size:7.3px;color:#2a2a2a;font-weight:400;font-family:'Liberation Sans',sans-serif;transform:scale(0.89,1.1);transform-origin:100% 6.18px;">69.44</div>
<div class="t" style="left:409.6px;width:32.19999999999999px;text-align:right;top:328.00px;font-size:7.3px;color:#2a2a2a;font-weight:400;font-family:'Liberation Sans',sans-serif;transform:scale(0.89,1.1);transform-origin:100% 6.18px;">14</div>
<div class="t" style="left:444.2px;top:328.00px;font-size:7.3px;color:#2a2a2a;font-weight:400;font-family:'Liberation Sans',sans-serif;transform:scale(0.88,1.1);transform-origin:0 6.18px;font-style:italic;">ZnS</div>
<div class="t" style="left:501.7px;width:39.599999999999966px;text-align:right;top:328.00px;font-size:7.3px;color:#2a2a2a;font-weight:400;font-family:'Liberation Sans',sans-serif;transform:scale(0.89,1.1);transform-origin:100% 6.18px;">2.35000</div>
<div class="t" style="left:542.3px;width:40.40000000000009px;text-align:right;top:328.00px;font-size:7.3px;color:#2a2a2a;font-weight:400;font-family:'Liberation Sans',sans-serif;transform:scale(0.89,1.1);transform-origin:100% 6.18px;">0.00000</div>
<div class="t" style="left:583.7px;width:40.09999999999991px;text-align:right;top:328.00px;font-size:7.3px;color:#2a2a2a;font-weight:400;font-family:'Liberation Sans',sans-serif;transform:scale(0.89,1.1);transform-origin:100% 6.18px;">0.25000000</div>
<div class="t" style="left:624.8px;width:40.80000000000007px;text-align:right;top:328.00px;font-size:7.3px;color:#2a2a2a;font-weight:400;font-family:'Liberation Sans',sans-serif;transform:scale(0.89,1.1);transform-origin:100% 6.18px;">79.79</div>
<div class="t" style="left:409.6px;width:32.19999999999999px;text-align:right;top:337.12px;font-size:7.3px;color:#2a2a2a;font-weight:400;font-family:'Liberation Sans',sans-serif;transform:scale(0.89,1.1);transform-origin:100% 6.18px;">15</div>
<div class="t" style="left:444.2px;top:337.12px;font-size:7.3px;color:#2a2a2a;font-weight:400;font-family:'Liberation Sans',sans-serif;transform:scale(0.88,1.1);transform-origin:0 6.18px;">Na3AlF6</div>
<div class="t" style="left:501.7px;width:39.599999999999966px;text-align:right;top:337.12px;font-size:7.3px;color:#2a2a2a;font-weight:400;font-family:'Liberation Sans',sans-serif;transform:scale(0.89,1.1);transform-origin:100% 6.18px;">1.35000</div>
<div class="t" style="left:542.3px;width:40.40000000000009px;text-align:right;top:337.12px;font-size:7.3px;color:#2a2a2a;font-weight:400;font-family:'Liberation Sans',sans-serif;transform:scale(0.89,1.1);transform-origin:100% 6.18px;">0.00000</div>
<div class="t" style="left:583.7px;width:40.09999999999991px;text-align:right;top:337.12px;font-size:7.3px;color:#2a2a2a;font-weight:400;font-family:'Liberation Sans',sans-serif;transform:scale(0.89,1.1);transform-origin:100% 6.18px;">0.12500000</div>
<div class="t" style="left:624.8px;width:40.80000000000007px;text-align:right;top:337.12px;font-size:7.3px;color:#2a2a2a;font-weight:400;font-family:'Liberation Sans',sans-serif;transform:scale(0.89,1.1);transform-origin:100% 6.18px;">69.44</div>
<div class="t" style="left:409.6px;width:32.19999999999999px;text-align:right;top:346.24px;font-size:7.3px;color:#2a2a2a;font-weight:400;font-family:'Liberation Sans',sans-serif;transform:scale(0.89,1.1);transform-origin:100% 6.18px;">16</div>
<div class="t" style="left:444.2px;top:346.24px;font-size:7.3px;color:#2a2a2a;font-weight:400;font-family:'Liberation Sans',sans-serif;transform:scale(0.88,1.1);transform-origin:0 6.18px;">Na3AlF6</div>
<div class="t" style="left:501.7px;width:39.599999999999966px;text-align:right;top:346.24px;font-size:7.3px;color:#2a2a2a;font-weight:400;font-family:'Liberation Sans',sans-serif;transform:scale(0.89,1.1);transform-origin:100% 6.18px;">1.35000</div>
<div class="t" style="left:542.3px;width:40.40000000000009px;text-align:right;top:346.24px;font-size:7.3px;color:#2a2a2a;font-weight:400;font-family:'Liberation Sans',sans-serif;transform:scale(0.89,1.1);transform-origin:100% 6.18px;">0.00000</div>
<div class="t" style="left:583.7px;width:40.09999999999991px;text-align:right;top:346.24px;font-size:7.3px;color:#2a2a2a;font-weight:400;font-family:'Liberation Sans',sans-serif;transform:scale(0.89,1.1);transform-origin:100% 6.18px;">0.12500000</div>
<div class="t" style="left:624.8px;width:40.80000000000007px;text-align:right;top:346.24px;font-size:7.3px;color:#2a2a2a;font-weight:400;font-family:'Liberation Sans',sans-serif;transform:scale(0.89,1.1);transform-origin:100% 6.18px;">69.44</div>
<div class="t" style="left:583.7px;width:40.09999999999991px;text-align:right;top:355.36px;font-size:7.3px;color:#2a2a2a;font-weight:400;font-family:'Liberation Sans',sans-serif;transform:scale(0.89,1.1);transform-origin:100% 6.18px;">3.50000000</div>
<div class="t" style="left:624.8px;width:40.80000000000007px;text-align:right;top:355.36px;font-size:7.3px;color:#2a2a2a;font-weight:400;font-family:'Liberation Sans',sans-serif;transform:scale(0.89,1.1);transform-origin:100% 6.18px;">1530.73</div>
</body></html>
